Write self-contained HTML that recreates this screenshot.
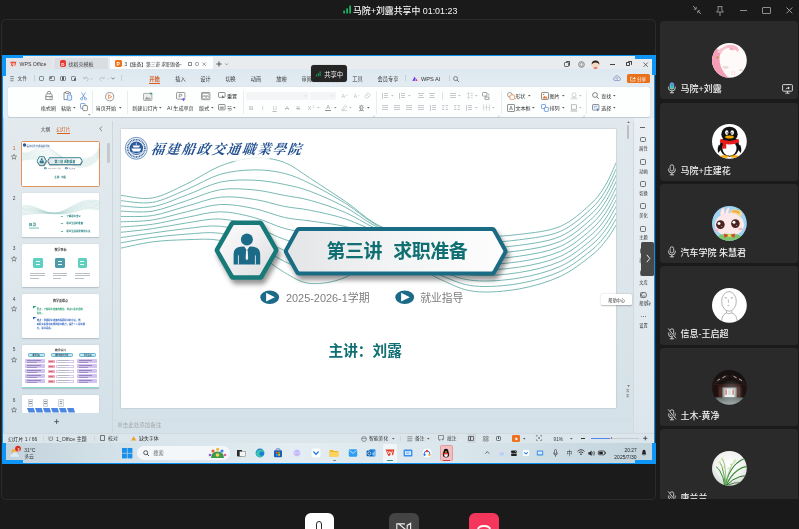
<!DOCTYPE html>
<html lang="zh-CN"><head><meta charset="utf-8"><title>马院+刘露共享中</title>
<style>
html,body{margin:0;padding:0;}
body{width:799px;height:529px;overflow:hidden;background:#1a1a1a;position:relative;font-family:"Liberation Sans","Noto Sans CJK SC",sans-serif;}
div,span.t,svg{position:absolute;box-sizing:border-box;}
span.t{white-space:nowrap;}
svg{overflow:visible;}
#wrap{left:0;top:0;width:799px;height:529px;will-change:transform;}
</style></head><body><div id="wrap">

<svg style="left:342.5px;top:4.5px;" width="9" height="9" viewBox="0 0 9 9"><rect x="0.3" y="5.6" width="1.6" height="2.9" rx=".5" fill="#1fc46a"/><rect x="3.3" y="3.2" width="1.6" height="5.3" rx=".5" fill="#1fc46a"/><rect x="6.3" y="0.5" width="1.6" height="8" rx=".5" fill="#1fc46a"/></svg>
<span class="t" style="top:5px;font-size:8.9px;line-height:12.46px;color:#f4f4f4;font-weight:500;left:353px;">马院+刘露共享中 01:01:23</span>
<svg style="left:692.4px;top:5.4px;" width="10" height="10" viewBox="0 0 10 10"><path d="M1 1 L4 4 M4.2 1.8 V4.2 H1.8 M9 9 L6 6 M5.8 8.2 V5.8 H8.2" stroke="#8e8e8e" stroke-width="1" fill="none"/></svg>
<svg style="left:714.4px;top:4.6px;" width="12" height="12" viewBox="0 0 12 12"><path d="M3.6 1.6 H8.4 M4.2 1.6 V5 L2.6 7 H9.4 L7.8 5 V1.6 M6 7 V11" stroke="#8e8e8e" stroke-width="1" fill="none"/></svg>
<div style="left:739.6px;top:10.2px;width:7.4px;height:1.1px;background:#8e8e8e;"></div>
<div style="left:762.2px;top:6.6px;width:8.4px;height:7.8px;border:1.1px solid #8e8e8e;border-radius:1px;"></div>
<svg style="left:785.6px;top:7.4px;" width="6.8" height="6.8" viewBox="0 0 6.8 6.8"><path d="M0.5 0.5 L6.3 6.3 M6.3 0.5 L0.5 6.3" stroke="#9c9c9c" stroke-width="1" fill="none"/></svg>
<div style="left:0.8px;top:18.9px;width:655px;height:481.4px;background:#1b1b1b;border:1px solid #2b2b2b;border-radius:4.5px;"></div>
<div style="left:2.1px;top:55.2px;width:653.1px;height:408.5px;background:#0b8fee;"></div>
<div style="left:3.3px;top:56.3px;width:651px;height:406.4px;background:#e3ecf2;"></div>
<div style="left:3.3px;top:56.3px;width:651px;height:14.2px;background:#e8ecef;"></div>
<div style="left:6px;top:58.2px;width:47px;height:11.4px;background:#e1e5e9;border-radius:2px 2px 0 0;"></div>
<div style="left:54.4px;top:58.2px;width:54px;height:11.4px;background:#d9dee3;border-radius:2px 2px 0 0;"></div>
<div style="left:110px;top:56.5px;width:102.6px;height:13px;background:#fcfdfe;border-radius:0 0 2.5px 2.5px;"></div>
<svg style="left:10px;top:60.6px;" width="6.6" height="5.8" viewBox="0 0 7 6"><path d="M0.3 0.6 H6.7 L5.4 5.4 L3.9 3.2 L3.1 5.4 L1.7 5.4 Z" fill="#e8402a"/><path d="M1.8 1.6 L2.6 4 L3.5 2 L4.4 4 L5.2 1.6" stroke="#fff" stroke-width=".55" fill="none"/></svg>
<span class="t" style="top:61px;font-size:5.2px;line-height:7.28px;color:#3a3a3a;left:19.6px;">WPS Office</span>
<div style="left:59.8px;top:60.2px;width:6.2px;height:7px;background:#e43b32;border-radius:1.8px;"></div>
<span class="t" style="top:62px;font-size:4.4px;line-height:6.16px;color:#fff;font-weight:700;left:62.9px;transform:translateX(-50%);">D</span>
<span class="t" style="top:61px;font-size:5.1px;line-height:7.14px;color:#444;left:68.2px;">找稻壳模板</span>
<div style="left:114.8px;top:60.2px;width:6.9px;height:6.9px;background:#f0731c;border-radius:1.4px;"></div>
<span class="t" style="top:62px;font-size:4.8px;line-height:6.72px;color:#fff;font-weight:700;left:118.2px;transform:translateX(-50%);">P</span>
<span class="t" style="top:62px;font-size:4.8px;line-height:6.72px;color:#3a3a3a;left:124.6px;letter-spacing:-.1px;">3【集备】第三讲 求职准备-</span>
<div style="left:187.6px;top:62.2px;width:4px;height:3.4px;border:.6px solid #8a8f94;border-radius:.6px;"></div>
<div style="left:194.6px;top:62px;width:4.6px;height:3.6px;border:.6px solid #8a8f94;border-radius:1.6px;"></div>
<svg style="left:202.2px;top:62px;" width="4.4" height="4.4" viewBox="0 0 4.4 4.4"><path d="M.5 .5 L3.9 3.9 M3.9 .5 L.5 3.9" stroke="#666" stroke-width=".6"/></svg>
<svg style="left:215.6px;top:61.4px;" width="6" height="6" viewBox="0 0 6 6"><path d="M3 .4 V5.6 M.4 3 H5.6" stroke="#333" stroke-width=".8"/></svg>
<svg style="left:224.6px;top:63px;" width="3.4" height="2.4" viewBox="0 0 3.4 2.4"><path d="M.4 .5 L1.7 1.8 L3 .5" stroke="#555" stroke-width=".55" fill="none"/></svg>
<div style="left:564.4px;top:61.6px;width:4.6px;height:5px;border:.6px solid #6a7075;border-radius:1px;"></div>
<div style="left:565.6px;top:60.6px;width:4.6px;height:5px;border-top:.7px solid #555;border-right:.7px solid #555;border-radius:1px;"></div>
<svg style="left:578px;top:61px;" width="7" height="7" viewBox="0 0 7 7"><circle cx="3.5" cy="3.5" r="2.9" fill="none" stroke="#555" stroke-width=".6"/><path d="M3.5 1.6 L5 2.6 V4.4 L3.5 5.4 L2 4.4 V2.6Z" fill="none" stroke="#555" stroke-width=".5"/></svg>
<svg style="left:591px;top:59.9px;" width="9" height="9" viewBox="0 0 9 9"><circle cx="4.5" cy="4.5" r="4.2" fill="#f3d9c2"/><path d="M.6 4.4 Q.8 .4 4.5 .4 Q8.2 .4 8.4 4.6 Q6.8 2.4 4.5 2.6 Q2 2.6 .6 4.4Z" fill="#2a211d"/><path d="M2.2 8 Q4.5 6.4 6.8 8 Q4.5 9.4 2.2 8Z" fill="#d44"/></svg>
<div style="left:609.6px;top:64px;width:5px;height:0.8px;background:#444;"></div>
<div style="left:626.2px;top:62.2px;width:4.2px;height:4.2px;border:.7px solid #444;border-radius:.8px;"></div>
<div style="left:627.6px;top:60.9px;width:4.2px;height:4.2px;border-top:.7px solid #444;border-right:.7px solid #444;border-radius:.8px;"></div>
<svg style="left:643.4px;top:61.6px;" width="5.4" height="5.4" viewBox="0 0 5.4 5.4"><path d="M.5 .5 L4.9 4.9 M4.9 .5 L.5 4.9" stroke="#444" stroke-width=".75"/></svg>
<div style="left:3.3px;top:69.4px;width:651px;height:17.4px;background:linear-gradient(180deg,#dde8f0,#e3ecf2);"></div>
<svg style="left:10.2px;top:75.6px;" width="4" height="5.4" viewBox="0 0 4 5.4"><path d="M.3 .6 H3.7 M.3 2.7 H3.7 M.3 4.8 H3.7" stroke="#444" stroke-width=".6"/></svg>
<span class="t" style="top:76px;font-size:4.7px;line-height:6.58px;color:#333;left:17.6px;">文件</span>
<div style="left:34.2px;top:75.4px;width:0.5px;height:6px;background:#c5d0d8;"></div>
<div style="left:38.6px;top:75.6px;width:5.4px;height:5.6px;border:.6px solid #7d8489;border-radius:1.2px;"></div>
<div style="left:49.4px;top:75.6px;width:5.4px;height:5.6px;border:.6px solid #7d8489;border-radius:1.2px;"></div>
<div style="left:60.199999999999996px;top:75.6px;width:5.4px;height:5.6px;border:.6px solid #7d8489;border-radius:1.2px;"></div>
<div style="left:70.60000000000001px;top:75.6px;width:5.4px;height:5.6px;border:.6px solid #7d8489;border-radius:1.2px;"></div>
<div style="left:50.4px;top:76.8px;width:2px;height:2px;background:#5a5f63;border-radius:1px;"></div>
<div style="left:61.6px;top:77.4px;width:2.4px;height:2.6px;background:#5a5f63;"></div>
<div style="left:73.6px;top:78.4px;width:2.6px;height:2.6px;background:#5a5f63;border-radius:1.3px;"></div>
<svg style="left:82.6px;top:75.6px;" width="6" height="5.6" viewBox="0 0 6 5.6"><path d="M1 2.4 Q3.4 .2 5 2.2 Q5.8 4 3.6 5.2" stroke="#a8adb2" stroke-width=".7" fill="none"/><path d="M.6 .8 L.9 2.8 L2.8 2.4" stroke="#a8adb2" stroke-width=".6" fill="none"/></svg>
<svg style="left:90.4px;top:77.6px;" width="3" height="2" viewBox="0 0 3 2"><path d="M.3 .3 L1.5 1.5 L2.7 .3" stroke="#a8adb2" stroke-width=".5" fill="none"/></svg>
<svg style="left:99px;top:75.6px;" width="6" height="5.6" viewBox="0 0 6 5.6"><path d="M5 2.4 Q2.6 .2 1 2.2 Q.2 4 2.4 5.2" stroke="#b4b9bd" stroke-width=".7" fill="none"/><path d="M5.4 .8 L5.1 2.8 L3.2 2.4" stroke="#b4b9bd" stroke-width=".6" fill="none"/></svg>
<svg style="left:107px;top:77.6px;" width="3" height="2" viewBox="0 0 3 2"><path d="M.3 .3 L1.5 1.5 L2.7 .3" stroke="#b4b9bd" stroke-width=".5" fill="none"/></svg>
<svg style="left:110.8px;top:77.2px;" width="4" height="3" viewBox="0 0 4 3"><path d="M.4 .5 L2 2.2 L3.6 .5" stroke="#555" stroke-width=".65" fill="none"/></svg>
<div style="left:121.2px;top:75.4px;width:0.5px;height:6px;background:#c5d0d8;"></div>
<span class="t" style="top:76px;font-size:5.3px;line-height:7.42px;color:#cf5418;font-weight:700;left:154.6px;transform:translateX(-50%);">开始</span>
<div style="left:149.2px;top:83.3px;width:10.8px;height:0.9px;background:#d9601f;"></div>
<span class="t" style="top:76px;font-size:5.2px;line-height:7.28px;color:#333;left:180.4px;transform:translateX(-50%);">插入</span>
<span class="t" style="top:76px;font-size:5.2px;line-height:7.28px;color:#333;left:205.4px;transform:translateX(-50%);">设计</span>
<span class="t" style="top:76px;font-size:5.2px;line-height:7.28px;color:#333;left:230.6px;transform:translateX(-50%);">切换</span>
<span class="t" style="top:76px;font-size:5.2px;line-height:7.28px;color:#333;left:256px;transform:translateX(-50%);">动画</span>
<span class="t" style="top:76px;font-size:5.2px;line-height:7.28px;color:#333;left:281.4px;transform:translateX(-50%);">放映</span>
<span class="t" style="top:76px;font-size:5.2px;line-height:7.28px;color:#333;left:306.6px;transform:translateX(-50%);">审阅</span>
<span class="t" style="top:76px;font-size:5.2px;line-height:7.28px;color:#333;left:332px;transform:translateX(-50%);">视图</span>
<span class="t" style="top:76px;font-size:5.2px;line-height:7.28px;color:#333;left:357.4px;transform:translateX(-50%);">工具</span>
<span class="t" style="top:76px;font-size:5.2px;line-height:7.28px;color:#333;left:388px;transform:translateX(-50%);">会员专享</span>
<div style="left:405.4px;top:75.4px;width:0.5px;height:6px;background:#c5d0d8;"></div>
<svg style="left:411.6px;top:75.8px;" width="6" height="5.4" viewBox="0 0 6 5.4"><path d="M.4 5 L2.6 .4 L3.8 2.8 L2.4 5Z" fill="#6a3df0"/><path d="M3.2 5 L4.4 2.4 L5.7 5Z" fill="#e8407a"/></svg>
<span class="t" style="top:76px;font-size:5.6px;line-height:7.84px;color:#333;left:421px;">WPS AI</span>
<div style="left:449.2px;top:75.4px;width:0.5px;height:6px;background:#c5d0d8;"></div>
<svg style="left:453.4px;top:75.6px;" width="6.4" height="6.4" viewBox="0 0 6.4 6.4"><circle cx="2.6" cy="2.6" r="2" fill="none" stroke="#555" stroke-width=".7"/><path d="M4.1 4.1 L5.9 5.9" stroke="#555" stroke-width=".8"/></svg>
<svg style="left:613.4px;top:75.4px;" width="8" height="6.4" viewBox="0 0 8 6.4"><path d="M2 5.6 Q.4 5.4 .5 3.8 Q.7 2.6 2 2.6 Q2.4 .6 4.2 .6 Q5.8 .7 6.1 2.4 Q7.6 2.6 7.5 4.2 Q7.4 5.6 6 5.6Z" fill="none" stroke="#6f7fb0" stroke-width=".65"/><path d="M4 4.8 V2.6 M3 3.5 L4 2.5 L5 3.5" stroke="#6f7fb0" stroke-width=".55" fill="none"/></svg>
<div style="left:626.6px;top:73.6px;width:23.6px;height:9.6px;background:#ea711c;border-radius:1.6px;"></div>
<svg style="left:629.8px;top:75.6px;" width="6" height="5.6" viewBox="0 0 6 5.6"><path d="M2.4 1.2 H1 Q.5 1.2 .5 1.8 V4.6 Q.5 5.1 1 5.1 H4.6 Q5.1 5.1 5.1 4.6 V3.8" stroke="#fff" stroke-width=".6" fill="none"/><path d="M2.2 3.6 Q2.6 1.8 4.2 1.8 V.8 L5.8 2.2 L4.2 3.5 V2.7 Q3 2.7 2.2 3.6Z" fill="#fff"/></svg>
<span class="t" style="top:77px;font-size:4.6px;line-height:6.44px;color:#fff;left:637px;">分享</span>
<div style="left:3.3px;top:86.6px;width:651px;height:31.6px;background:#e3ecf2;"></div>
<div style="left:7.6px;top:87px;width:642.6px;height:30.4px;background:#fdfefe;border-radius:2.6px;box-shadow:0 .5px 1px rgba(120,135,150,.35);"></div>
<svg style="left:44.6px;top:91.4px;" width="8" height="9.4" viewBox="0 0 8 9.4"><path d="M2.6 2.6 V1.2 Q2.6 .5 3.4 .5 H4.6 Q5.4 .5 5.4 1.2 V2.6 M.8 4.6 Q.8 2.8 2.4 2.8 H5.6 Q7.2 2.8 7.2 4.6 V8.6 H.8Z M.8 5.6 H7.2" fill="none" stroke="#555" stroke-width=".65"/><path d="M5 5.6 V7.6" stroke="#555" stroke-width=".5"/></svg>
<span class="t" style="top:105px;font-size:5.1px;line-height:7.14px;color:#3a3a3a;left:48.4px;transform:translateX(-50%);">格式刷</span>
<svg style="left:63.4px;top:91.4px;" width="9" height="9.6" viewBox="0 0 9 9.6"><path d="M2.6 1.6 H1 V8.6 H4" fill="none" stroke="#555" stroke-width=".65"/><path d="M6 1.6 H7.4 V3.6" fill="none" stroke="#555" stroke-width=".65"/><rect x="2.6" y=".6" width="3.4" height="1.9" rx=".5" fill="none" stroke="#555" stroke-width=".6"/><rect x="4.4" y="4" width="4.2" height="5.2" rx=".6" fill="#e8f0ff" stroke="#3f78d8" stroke-width=".65"/></svg>
<span class="t" style="top:105px;font-size:5.1px;line-height:7.14px;color:#3a3a3a;left:66.2px;transform:translateX(-50%);">粘贴</span>
<svg style="left:72.8px;top:107.0px;" width="2.6" height="1.8" viewBox="0 0 2.6 1.8"><path d="M0 0 H2.6 L1.3 1.6Z" fill="#555"/></svg>
<svg style="left:80.4px;top:91.8px;" width="7" height="8.4" viewBox="0 0 7 8.4"><path d="M1.6 .5 L4.8 6 M5.4 .5 L2.2 6" stroke="#3f78d8" stroke-width=".65" fill="none"/><circle cx="1.6" cy="6.8" r="1.1" fill="none" stroke="#3f78d8" stroke-width=".6"/><circle cx="5.4" cy="6.8" r="1.1" fill="none" stroke="#3f78d8" stroke-width=".6"/></svg>
<svg style="left:80px;top:103.2px;" width="8" height="8" viewBox="0 0 8 8"><rect x=".5" y=".5" width="4.6" height="5" rx=".7" fill="none" stroke="#3f78d8" stroke-width=".65"/><rect x="2.8" y="2.6" width="4.6" height="5" rx=".7" fill="#fff" stroke="#555" stroke-width=".65"/></svg>
<svg style="left:88px;top:114.2px;" width="2.6" height="1.8" viewBox="0 0 2.6 1.8"><path d="M0 0 H2.6 L1.3 1.6Z" fill="#888"/></svg>
<div style="left:92.4px;top:91px;width:0.5px;height:23px;background:#e9edf0;"></div>
<svg style="left:104.6px;top:91.6px;" width="9.6" height="9.6" viewBox="0 0 9.6 9.6"><circle cx="4.7" cy="4.7" r="4.1" fill="none" stroke="#666" stroke-width=".65"/><path d="M3.5 2.7 L6.7 4.7 L3.5 6.7Z" fill="none" stroke="#e8702a" stroke-width=".7" stroke-linejoin="round"/></svg>
<span class="t" style="top:105px;font-size:5.1px;line-height:7.14px;color:#3a3a3a;left:105.8px;transform:translateX(-50%);">当页开始</span>
<svg style="left:119.4px;top:107.0px;" width="2.6" height="1.8" viewBox="0 0 2.6 1.8"><path d="M0 0 H2.6 L1.3 1.6Z" fill="#555"/></svg>
<div style="left:127.4px;top:91px;width:0.5px;height:23px;background:#e9edf0;"></div>
<svg style="left:142.6px;top:91.6px;" width="10" height="9" viewBox="0 0 10 9"><rect x=".5" y="1.4" width="8.4" height="7" rx=".8" fill="#eceeef" stroke="#777" stroke-width=".6"/><path d="M1.6 7.4 L3.8 4.6 L5.4 6.2 L6.4 5.2 L8 7.4Z" fill="#9aa0a5"/><path d="M8 .2 V3 M6.6 1.6 H9.4" stroke="#2da05a" stroke-width=".7"/></svg>
<span class="t" style="top:105px;font-size:5.1px;line-height:7.14px;color:#3a3a3a;left:145px;transform:translateX(-50%);">新建幻灯片</span>
<svg style="left:158.8px;top:107.0px;" width="2.6" height="1.8" viewBox="0 0 2.6 1.8"><path d="M0 0 H2.6 L1.3 1.6Z" fill="#555"/></svg>
<svg style="left:176px;top:91.6px;" width="10" height="9.4" viewBox="0 0 10 9.4"><rect x=".5" y=".5" width="8.4" height="6.6" rx=".8" fill="none" stroke="#666" stroke-width=".65"/><path d="M3.2 5.6 V2.2 H4.8 Q6 2.2 6 3.2 Q6 4.2 4.8 4.2 H3.2" fill="none" stroke="#666" stroke-width=".6"/><path d="M7.4 5.4 L8 7 L9.6 7.6 L8 8.2 L7.4 9.4 L6.8 8.2 L5.2 7.6 L6.8 7Z" fill="#7a4df0"/></svg>
<span class="t" style="top:105px;font-size:5.1px;line-height:7.14px;color:#3a3a3a;left:180.4px;transform:translateX(-50%);">AI 生成单页</span>
<svg style="left:201px;top:92px;" width="9.4" height="8.4" viewBox="0 0 9.4 8.4"><rect x=".5" y=".5" width="8.4" height="7.2" rx=".8" fill="#eceeef" stroke="#666" stroke-width=".65"/><rect x="1.8" y="1.8" width="5.8" height="1.8" fill="#fff" stroke="#777" stroke-width=".4"/><rect x="1.8" y="4.6" width="2.4" height="2" fill="#fff" stroke="#777" stroke-width=".4"/><rect x="5.2" y="4.6" width="2.4" height="2" fill="#fff" stroke="#777" stroke-width=".4"/></svg>
<span class="t" style="top:105px;font-size:5.1px;line-height:7.14px;color:#3a3a3a;left:204.2px;transform:translateX(-50%);">版式</span>
<svg style="left:210.6px;top:107.0px;" width="2.6" height="1.8" viewBox="0 0 2.6 1.8"><path d="M0 0 H2.6 L1.3 1.6Z" fill="#555"/></svg>
<svg style="left:218.4px;top:92px;" width="8" height="7" viewBox="0 0 8 7"><rect x=".5" y=".5" width="6.6" height="4.8" rx=".7" fill="none" stroke="#555" stroke-width=".65"/><path d="M4 3 L6.4 5.6 L5.2 5.6 L4.6 6.8Z" fill="#555"/></svg>
<span class="t" style="top:93px;font-size:5.1px;line-height:7.14px;color:#333;left:227px;">重置</span>
<svg style="left:218.4px;top:103.8px;" width="8" height="7" viewBox="0 0 8 7"><rect x=".5" y=".5" width="6.6" height="5.4" rx=".7" fill="none" stroke="#555" stroke-width=".65"/><rect x="1.8" y="2.6" width="4" height="2.2" fill="#9aa0a5"/></svg>
<span class="t" style="top:105px;font-size:5.1px;line-height:7.14px;color:#333;left:227px;">节</span>
<svg style="left:233.4px;top:107.0px;" width="2.6" height="1.8" viewBox="0 0 2.6 1.8"><path d="M0 0 H2.6 L1.3 1.6Z" fill="#555"/></svg>
<div style="left:243.2px;top:91px;width:0.5px;height:23px;background:#e9edf0;"></div>
<div style="left:246px;top:91.6px;width:62.6px;height:8.8px;background:#f3f5f6;border-radius:1.4px;"></div>
<div style="left:310.4px;top:91.6px;width:25.4px;height:8.8px;background:#f3f5f6;border-radius:1.4px;"></div>
<svg style="left:304px;top:95.2px;" width="3" height="2" viewBox="0 0 3 2"><path d="M.3 .3 L1.5 1.5 L2.7 .3" stroke="#c4c8cc" stroke-width=".5" fill="none"/></svg>
<svg style="left:331px;top:95.2px;" width="3" height="2" viewBox="0 0 3 2"><path d="M.3 .3 L1.5 1.5 L2.7 .3" stroke="#c4c8cc" stroke-width=".5" fill="none"/></svg>
<span class="t" style="top:93px;font-size:5.6px;line-height:7.84px;color:#b9bdc1;left:343.4px;transform:translateX(-50%);">A</span>
<span class="t" style="top:93px;font-size:3.4px;line-height:4.76px;color:#b9bdc1;left:347px;transform:translateX(-50%);">+</span>
<span class="t" style="top:93px;font-size:5px;line-height:7.0px;color:#b9bdc1;left:355.4px;transform:translateX(-50%);">A</span>
<span class="t" style="top:93px;font-size:3.6px;line-height:5.04px;color:#b9bdc1;left:358.8px;transform:translateX(-50%);">-</span>
<svg style="left:364.4px;top:92.4px;" width="7" height="6.6" viewBox="0 0 7 6.6"><path d="M3.8 .6 L6.4 3.2 L3.4 6 H1.8 L.6 4.6Z M2.2 2.2 L4.8 4.8" fill="none" stroke="#b9bdc1" stroke-width=".6"/></svg>
<span class="t" style="top:104px;font-size:6px;line-height:8.4px;color:#b9bdc1;font-weight:700;left:251.2px;transform:translateX(-50%);">B</span>
<span class="t" style="top:104px;font-size:6px;line-height:8.4px;color:#b9bdc1;left:262.6px;transform:translateX(-50%);font-style:italic;">I</span>
<span class="t" style="top:104px;font-size:6px;line-height:8.4px;color:#b9bdc1;left:274.6px;transform:translateX(-50%);text-decoration:underline;">U</span>
<span class="t" style="top:104px;font-size:6px;line-height:8.4px;color:#b9bdc1;left:287px;transform:translateX(-50%);text-decoration:line-through;">A</span>
<span class="t" style="top:104px;font-size:6px;line-height:8.4px;color:#b9bdc1;left:298.2px;transform:translateX(-50%);text-decoration:line-through;">S</span>
<span class="t" style="top:104px;font-size:6px;line-height:8.4px;color:#b9bdc1;left:309.6px;transform:translateX(-50%);">X</span>
<span class="t" style="top:105px;font-size:3.2px;line-height:4.48px;color:#b9bdc1;left:313.4px;transform:translateX(-50%);">2</span>
<svg style="left:317px;top:107.0px;" width="2.6" height="1.8" viewBox="0 0 2.6 1.8"><path d="M0 0 H2.6 L1.3 1.6Z" fill="#b9bdc1"/></svg>
<span class="t" style="top:104px;font-size:5.6px;line-height:7.84px;color:#9aa0a5;left:328px;transform:translateX(-50%);">A</span>
<div style="left:325.4px;top:110.4px;width:5.2px;height:1px;background:#8c9196;"></div>
<svg style="left:333.6px;top:107.0px;" width="2.6" height="1.8" viewBox="0 0 2.6 1.8"><path d="M0 0 H2.6 L1.3 1.6Z" fill="#8c9196"/></svg>
<svg style="left:340.6px;top:104.2px;" width="7" height="7" viewBox="0 0 7 7"><path d="M1 5.6 L4.4 1 L5.8 2.2 L2.6 6 H1Z" fill="none" stroke="#b9bdc1" stroke-width=".6"/><path d="M.4 6.6 H6.4" stroke="#b9bdc1" stroke-width=".6"/></svg>
<svg style="left:348.6px;top:107.0px;" width="2.6" height="1.8" viewBox="0 0 2.6 1.8"><path d="M0 0 H2.6 L1.3 1.6Z" fill="#b9bdc1"/></svg>
<span class="t" style="top:105px;font-size:5.4px;line-height:7.56px;color:#555;left:361.4px;transform:translateX(-50%);">变</span>
<svg style="left:366.8px;top:107.0px;" width="2.6" height="1.8" viewBox="0 0 2.6 1.8"><path d="M0 0 H2.6 L1.3 1.6Z" fill="#555"/></svg>
<div style="left:376.2px;top:91px;width:0.5px;height:23px;background:#e9edf0;"></div>
<svg style="left:382px;top:93px;" width="6" height="6" viewBox="0 0 6 6"><path d="M.5 0 V6 M2 .5 H6 M2 2.5 H6 M2 4.5 H6" stroke="#c6cacf" stroke-width="1" fill="none"/></svg>
<svg style="left:391.4px;top:95.0px;" width="2.6" height="1.8" viewBox="0 0 2.6 1.8"><path d="M0 0 H2.6 L1.3 1.6Z" fill="#b9bdc1"/></svg>
<svg style="left:399px;top:93px;" width="6" height="6" viewBox="0 0 6 6"><path d="M.5 0 V6 M2 .5 H6 M2 2.5 H6 M2 4.5 H6" stroke="#c6cacf" stroke-width="1" fill="none"/></svg>
<svg style="left:408.4px;top:95.0px;" width="2.6" height="1.8" viewBox="0 0 2.6 1.8"><path d="M0 0 H2.6 L1.3 1.6Z" fill="#b9bdc1"/></svg>
<svg style="left:418px;top:93px;" width="6" height="6" viewBox="0 0 6 6"><path d="M0 .5 H6 M1 2.5 H5 M0 4.5 H6" stroke="#c6cacf" stroke-width="1" fill="none"/></svg>
<svg style="left:429px;top:93px;" width="6" height="6" viewBox="0 0 6 6"><path d="M0 .5 H6 M1 2.5 H5 M0 4.5 H6" stroke="#c6cacf" stroke-width="1" fill="none"/></svg>
<div style="left:441.8px;top:92px;width:0.5px;height:8px;background:#e1e5e8;"></div>
<svg style="left:450px;top:93px;" width="6" height="6" viewBox="0 0 6 6"><path d="M0 .5 H6 M0 2.5 H6 M0 4.5 H6" stroke="#c6cacf" stroke-width="1" fill="none"/></svg>
<svg style="left:458.2px;top:95.0px;" width="2.6" height="1.8" viewBox="0 0 2.6 1.8"><path d="M0 0 H2.6 L1.3 1.6Z" fill="#b9bdc1"/></svg>
<svg style="left:466.6px;top:92.2px;" width="6" height="7" viewBox="0 0 6 7"><path d="M1.4 .6 V6.4 M.2 1.8 L1.4 .6 L2.6 1.8 M.2 5.2 L1.4 6.4 L2.6 5.2 M3.6 1.4 H5.8 M3.6 3.5 H5.8 M3.6 5.6 H5.8" stroke="#b9bdc1" stroke-width=".6" fill="none"/></svg>
<svg style="left:474.6px;top:95.0px;" width="2.6" height="1.8" viewBox="0 0 2.6 1.8"><path d="M0 0 H2.6 L1.3 1.6Z" fill="#b9bdc1"/></svg>
<svg style="left:481.8px;top:91.8px;" width="8" height="8" viewBox="0 0 8 8"><rect x=".5" y=".5" width="4.4" height="3.6" rx=".6" fill="none" stroke="#666" stroke-width=".6"/><path d="M3 5 L7 5 L7 7.4 L3 7.4Z" fill="#fff" stroke="#666" stroke-width=".6"/><path d="M5.6 1.6 Q7 1.8 7 3.6" stroke="#666" stroke-width=".55" fill="none"/></svg>
<svg style="left:382px;top:105px;" width="6" height="6" viewBox="0 0 6 6"><path d="M0 .5 H6 M0 2.5 H6 M0 4.5 H6" stroke="#c6cacf" stroke-width="1" fill="none"/></svg>
<svg style="left:394px;top:105px;" width="6" height="6" viewBox="0 0 6 6"><path d="M0 .5 H6 M0 2.5 H6 M0 4.5 H6" stroke="#c6cacf" stroke-width="1" fill="none"/></svg>
<svg style="left:406px;top:105px;" width="6" height="6" viewBox="0 0 6 6"><path d="M0 .5 H6 M0 2.5 H6 M0 4.5 H6" stroke="#c6cacf" stroke-width="1" fill="none"/></svg>
<svg style="left:418px;top:105px;" width="6" height="6" viewBox="0 0 6 6"><path d="M0 .5 H6 M0 2.5 H6 M0 4.5 H6" stroke="#c6cacf" stroke-width="1" fill="none"/></svg>
<svg style="left:430px;top:105px;" width="6" height="6" viewBox="0 0 6 6"><path d="M.5 0 V6 M2 .5 H6 M2 2.5 H6 M2 4.5 H6" stroke="#c6cacf" stroke-width="1" fill="none"/></svg>
<svg style="left:442px;top:105px;" width="6" height="6" viewBox="0 0 6 6"><path d="M0 .5 H2.4 M3.6 .5 H6 M0 4.5 H2.4 M3.6 4.5 H6 M1.2 1.6 V3.4 M4.8 1.6 V3.4" stroke="#c6cacf" stroke-width="1" fill="none"/></svg>
<svg style="left:454px;top:105px;" width="6" height="6" viewBox="0 0 6 6"><path d="M0 .5 H2.4 M3.6 .5 H6 M0 4.5 H2.4 M3.6 4.5 H6 M1.2 1.6 V3.4 M4.8 1.6 V3.4" stroke="#c6cacf" stroke-width="1" fill="none"/></svg>
<svg style="left:466px;top:105px;" width="6" height="6" viewBox="0 0 6 6"><path d="M.5 0 V6 M2 .5 H6 M2 2.5 H6 M2 4.5 H6" stroke="#c6cacf" stroke-width="1" fill="none"/></svg>
<svg style="left:474.6px;top:107.0px;" width="2.6" height="1.8" viewBox="0 0 2.6 1.8"><path d="M0 0 H2.6 L1.3 1.6Z" fill="#b9bdc1"/></svg>
<svg style="left:483px;top:104.4px;" width="7" height="7" viewBox="0 0 7 7"><path d="M.6 .4 V6.6 M3.5 .4 V6.6 M6.4 .4 V6.6 M1.4 3.5 H2.7 M4.3 3.5 H5.6" stroke="#b9bdc1" stroke-width=".6"/></svg>
<svg style="left:491.6px;top:107.0px;" width="2.6" height="1.8" viewBox="0 0 2.6 1.8"><path d="M0 0 H2.6 L1.3 1.6Z" fill="#b9bdc1"/></svg>
<svg style="left:497px;top:114.6px;" width="2.4" height="2.4" viewBox="0 0 2.4 2.4"><path d="M.2 2.2 H2.2 V.2" stroke="#b0b5b9" stroke-width=".5" fill="none"/></svg>
<svg style="left:372px;top:114.6px;" width="2.4" height="2.4" viewBox="0 0 2.4 2.4"><path d="M.2 2.2 H2.2 V.2" stroke="#b0b5b9" stroke-width=".5" fill="none"/></svg>
<div style="left:501.4px;top:91px;width:0.5px;height:23px;background:#e9edf0;"></div>
<svg style="left:506.6px;top:91.8px;" width="8" height="8" viewBox="0 0 8 8"><circle cx="2.8" cy="2.8" r="2.3" fill="none" stroke="#666" stroke-width=".6"/><rect x="3" y="3" width="4.4" height="4.4" rx=".6" fill="#fff" stroke="#e8702a" stroke-width=".65"/></svg>
<span class="t" style="top:93px;font-size:5.1px;line-height:7.14px;color:#333;left:515.2px;">形状</span>
<svg style="left:527.8px;top:95.0px;" width="2.6" height="1.8" viewBox="0 0 2.6 1.8"><path d="M0 0 H2.6 L1.3 1.6Z" fill="#555"/></svg>
<svg style="left:540.6px;top:91.8px;" width="8" height="8" viewBox="0 0 8 8"><rect x=".5" y=".5" width="7" height="7" rx=".8" fill="none" stroke="#555" stroke-width=".65"/><path d="M1.4 6.4 L3.4 3.8 L4.8 5.2 L5.6 4.4 L6.8 6.4Z" fill="#e8702a"/><circle cx="2.6" cy="2.4" r=".7" fill="#e8702a"/></svg>
<span class="t" style="top:93px;font-size:5.1px;line-height:7.14px;color:#333;left:549.4px;">图片</span>
<svg style="left:561.6px;top:95.0px;" width="2.6" height="1.8" viewBox="0 0 2.6 1.8"><path d="M0 0 H2.6 L1.3 1.6Z" fill="#555"/></svg>
<svg style="left:570px;top:91.8px;" width="8" height="8" viewBox="0 0 8 8"><circle cx="4" cy="2.8" r="2" fill="none" stroke="#b9bdc1" stroke-width=".6"/><path d="M.6 6.8 H7.4 M1.6 5.4 H6.4" stroke="#b9bdc1" stroke-width=".6"/></svg>
<svg style="left:579.4px;top:95.0px;" width="2.6" height="1.8" viewBox="0 0 2.6 1.8"><path d="M0 0 H2.6 L1.3 1.6Z" fill="#b9bdc1"/></svg>
<svg style="left:506.6px;top:104px;" width="8" height="8" viewBox="0 0 8 8"><rect x=".5" y=".5" width="7" height="7" rx=".6" fill="none" stroke="#555" stroke-width=".65"/><path d="M2.4 6 L4 2 L5.6 6 M3 4.8 H5" stroke="#555" stroke-width=".55" fill="none"/></svg>
<span class="t" style="top:105px;font-size:5.1px;line-height:7.14px;color:#333;left:515.4px;">文本框</span>
<svg style="left:532.4px;top:107.0px;" width="2.6" height="1.8" viewBox="0 0 2.6 1.8"><path d="M0 0 H2.6 L1.3 1.6Z" fill="#555"/></svg>
<svg style="left:540.6px;top:104px;" width="8" height="8" viewBox="0 0 8 8"><rect x=".5" y=".5" width="4" height="4" rx=".6" fill="none" stroke="#3f78d8" stroke-width=".65"/><rect x="3.4" y="3.4" width="4" height="4" rx=".6" fill="#fff" stroke="#3f78d8" stroke-width=".65"/></svg>
<span class="t" style="top:105px;font-size:5.1px;line-height:7.14px;color:#333;left:549.4px;">排列</span>
<svg style="left:561.6px;top:107.0px;" width="2.6" height="1.8" viewBox="0 0 2.6 1.8"><path d="M0 0 H2.6 L1.3 1.6Z" fill="#555"/></svg>
<svg style="left:570px;top:104px;" width="8" height="8" viewBox="0 0 8 8"><rect x="1.4" y=".8" width="5.2" height="4.4" fill="none" stroke="#8c9196" stroke-width=".6"/><path d="M.6 7 H7.4" stroke="#8c9196" stroke-width=".7"/></svg>
<svg style="left:579.4px;top:107.0px;" width="2.6" height="1.8" viewBox="0 0 2.6 1.8"><path d="M0 0 H2.6 L1.3 1.6Z" fill="#b9bdc1"/></svg>
<svg style="left:582.4px;top:114.6px;" width="2.4" height="2.4" viewBox="0 0 2.4 2.4"><path d="M.2 2.2 H2.2 V.2" stroke="#b0b5b9" stroke-width=".5" fill="none"/></svg>
<div style="left:586.4px;top:91px;width:0.5px;height:23px;background:#e9edf0;"></div>
<svg style="left:592.4px;top:92px;" width="7.4" height="7.4" viewBox="0 0 7.4 7.4"><circle cx="3" cy="3" r="2.4" fill="none" stroke="#555" stroke-width=".7"/><path d="M4.8 4.8 L6.8 6.8" stroke="#555" stroke-width=".8"/></svg>
<span class="t" style="top:93px;font-size:5.1px;line-height:7.14px;color:#333;left:601.2px;">查找</span>
<svg style="left:613px;top:95.0px;" width="2.6" height="1.8" viewBox="0 0 2.6 1.8"><path d="M0 0 H2.6 L1.3 1.6Z" fill="#555"/></svg>
<svg style="left:592.2px;top:104px;" width="8" height="8" viewBox="0 0 8 8"><rect x=".5" y=".5" width="6.4" height="5.6" rx=".7" fill="none" stroke="#555" stroke-width=".65"/><path d="M1.6 2.2 H5.6 M1.6 3.8 H3.4" stroke="#3f78d8" stroke-width=".6"/><path d="M4.4 3.6 L7.2 6.2 L5.8 6.3 L5.2 7.6Z" fill="#3f78d8"/></svg>
<span class="t" style="top:105px;font-size:5.1px;line-height:7.14px;color:#333;left:601.2px;">选择</span>
<svg style="left:613px;top:107.0px;" width="2.6" height="1.8" viewBox="0 0 2.6 1.8"><path d="M0 0 H2.6 L1.3 1.6Z" fill="#555"/></svg>
<div style="left:3.3px;top:117.6px;width:109.6px;height:316px;background:linear-gradient(180deg,#e3eaee 0%,#dde7ec 50%,#d3e0e8 100%);"></div>
<div style="left:112.9px;top:117.6px;width:520.6px;height:316px;background:linear-gradient(180deg,#e1e9ed 0%,#dce6eb 50%,#d4e1e8 100%);"></div>
<div style="left:112.2px;top:121px;width:0.6px;height:312px;background:#cdd8de;"></div>
<div style="left:633.5px;top:117.6px;width:20.8px;height:316px;background:linear-gradient(180deg,#e9eff2 0%,#e4ecf0 50%,#dbe6ec 100%);"></div>
<div style="left:633.2px;top:121px;width:0.6px;height:312px;background:#d0dae0;"></div>
<div style="left:3.3px;top:117.6px;width:1px;height:316px;background:#c3cfd7;"></div>
<span class="t" style="top:127px;font-size:4.7px;line-height:6.58px;color:#3a3a3a;left:45.4px;transform:translateX(-50%);">大纲</span>
<span class="t" style="top:127px;font-size:4.7px;line-height:6.58px;color:#d2581c;left:63.4px;transform:translateX(-50%);">幻灯片</span>
<div style="left:57px;top:132.6px;width:12.8px;height:0.8px;background:#d9601f;"></div>
<svg style="left:99.4px;top:126px;" width="3.6" height="5.6" viewBox="0 0 3.6 5.6"><path d="M3 .5 L.7 2.8 L3 5.1" stroke="#555" stroke-width=".7" fill="none"/></svg>
<div style="left:107.4px;top:143px;width:2.2px;height:20.4px;background:#c3c9cd;border-radius:1.1px;"></div>
<div style="left:20.6px;top:141.4px;width:79.6px;height:46px;background:#fff;border:1.1px solid #e4935c;border-radius:1.6px;"></div>
<span class="t" style="top:146px;font-size:4.8px;line-height:6.72px;color:#d2581c;left:14.2px;transform:translateX(-50%);">1</span>
<svg style="left:11.2px;top:154.4px;" width="6" height="6" viewBox="0 0 6 6"><polygon points="3.00,0.30 3.73,1.99 5.57,2.17 4.19,3.39 4.59,5.18 3.00,4.25 1.41,5.18 1.81,3.39 0.43,2.17 2.27,1.99" fill="none" stroke="#555" stroke-width=".6" stroke-linejoin="round"/></svg>
<div style="left:21.8px;top:193.2px;width:77.4px;height:43.6px;background:#fff;border-radius:1px;box-shadow:0 .4px 1.2px rgba(100,120,135,.35);"></div>
<span class="t" style="top:196px;font-size:4.8px;line-height:6.72px;color:#444;left:14.2px;transform:translateX(-50%);">2</span>
<div style="left:21.8px;top:243.8px;width:77.4px;height:43.6px;background:#fff;border-radius:1px;box-shadow:0 .4px 1.2px rgba(100,120,135,.35);"></div>
<span class="t" style="top:246px;font-size:4.8px;line-height:6.72px;color:#444;left:14.2px;transform:translateX(-50%);">3</span>
<svg style="left:11.2px;top:255.8px;" width="6" height="6" viewBox="0 0 6 6"><polygon points="3.00,0.30 3.73,1.99 5.57,2.17 4.19,3.39 4.59,5.18 3.00,4.25 1.41,5.18 1.81,3.39 0.43,2.17 2.27,1.99" fill="none" stroke="#555" stroke-width=".6" stroke-linejoin="round"/></svg>
<div style="left:21.8px;top:294.2px;width:77.4px;height:43.6px;background:#fff;border-radius:1px;box-shadow:0 .4px 1.2px rgba(100,120,135,.35);"></div>
<span class="t" style="top:297px;font-size:4.8px;line-height:6.72px;color:#444;left:14.2px;transform:translateX(-50%);">4</span>
<svg style="left:11.2px;top:306.2px;" width="6" height="6" viewBox="0 0 6 6"><polygon points="3.00,0.30 3.73,1.99 5.57,2.17 4.19,3.39 4.59,5.18 3.00,4.25 1.41,5.18 1.81,3.39 0.43,2.17 2.27,1.99" fill="none" stroke="#555" stroke-width=".6" stroke-linejoin="round"/></svg>
<div style="left:21.8px;top:344.6px;width:77.4px;height:43.6px;background:#fff;border-radius:1px;box-shadow:0 .4px 1.2px rgba(100,120,135,.35);"></div>
<span class="t" style="top:347px;font-size:4.8px;line-height:6.72px;color:#444;left:14.2px;transform:translateX(-50%);">5</span>
<svg style="left:11.2px;top:356.6px;" width="6" height="6" viewBox="0 0 6 6"><polygon points="3.00,0.30 3.73,1.99 5.57,2.17 4.19,3.39 4.59,5.18 3.00,4.25 1.41,5.18 1.81,3.39 0.43,2.17 2.27,1.99" fill="none" stroke="#555" stroke-width=".6" stroke-linejoin="round"/></svg>
<div style="left:21.8px;top:395px;width:77.4px;height:18px;background:#fff;border-radius:1px;box-shadow:0 .4px 1.2px rgba(100,120,135,.35);"></div>
<span class="t" style="top:398px;font-size:4.8px;line-height:6.72px;color:#444;left:14.2px;transform:translateX(-50%);">6</span>
<svg style="left:11.2px;top:407px;" width="6" height="6" viewBox="0 0 6 6"><polygon points="3.00,0.30 3.73,1.99 5.57,2.17 4.19,3.39 4.59,5.18 3.00,4.25 1.41,5.18 1.81,3.39 0.43,2.17 2.27,1.99" fill="none" stroke="#555" stroke-width=".6" stroke-linejoin="round"/></svg>
<svg style="left:21.8px;top:142.0px;" width="77.4" height="43.6" viewBox="0 0 495 279"><g fill="none" stroke="#4fa39c" stroke-width="1.4249999999999998" opacity=".55"><path d="M0.0 66.4 C5.2 66.8 20.4 70.9 31.3 69.0 C42.2 67.1 54.0 60.4 65.3 55.1 C76.6 49.8 88.0 41.4 99.3 37.0 C110.6 32.6 122.6 29.6 133.3 29.0 C144.0 28.4 154.0 30.0 163.3 33.4 C172.6 36.8 179.1 42.9 189.3 49.4 C199.5 55.9 211.8 64.1 224.3 72.4 C236.8 80.7 248.5 93.6 264.3 99.4 C280.1 105.2 304.5 105.9 319.3 107.4 C334.1 108.9 340.1 108.7 353.3 108.4 C366.5 108.1 384.0 107.2 398.3 105.4 C412.6 103.6 427.5 102.4 439.3 97.4 C451.1 92.4 461.8 82.2 469.3 75.4 C476.8 68.6 480.0 63.4 484.3 56.4 C488.6 49.4 493.5 37.2 495.3 33.4"/><path d="M0.0 71.7 C5.2 72.0 20.4 75.2 31.3 73.4 C42.2 71.6 54.0 65.3 65.3 60.7 C76.6 56.0 88.0 48.6 99.3 45.3 C110.6 42.1 122.6 41.0 133.3 40.9 C144.0 40.7 154.0 42.1 163.3 44.4 C172.6 46.7 179.1 49.7 189.3 54.7 C199.5 59.6 211.8 66.7 224.3 74.3 C236.8 81.9 248.5 94.1 264.3 100.4 C280.1 106.6 304.5 109.5 319.3 111.7 C334.1 113.9 340.1 113.9 353.3 113.8 C366.5 113.7 384.0 112.8 398.3 110.8 C412.6 108.9 427.5 107.4 439.3 102.4 C451.1 97.4 461.8 87.3 469.3 80.6 C476.8 73.9 480.0 68.8 484.3 62.0 C488.6 55.2 493.5 43.4 495.3 39.7"/><path d="M0.0 76.9 C5.2 77.1 20.4 79.6 31.3 77.8 C42.2 76.0 54.0 70.3 65.3 66.2 C76.6 62.1 88.0 55.6 99.3 53.1 C110.6 50.6 122.6 50.8 133.3 51.2 C144.0 51.6 154.0 53.5 163.3 55.4 C172.6 57.3 179.1 58.6 189.3 62.4 C199.5 66.2 211.8 71.6 224.3 78.2 C236.8 84.8 248.5 95.6 264.3 101.9 C280.1 108.2 304.5 113.1 319.3 116.0 C334.1 118.9 340.1 119.2 353.3 119.2 C366.5 119.3 384.0 118.3 398.3 116.3 C412.6 114.3 427.5 112.5 439.3 107.4 C451.1 102.3 461.8 92.4 469.3 85.8 C476.8 79.2 480.0 74.2 484.3 67.6 C488.6 60.9 493.5 49.5 495.3 45.9"/><path d="M0.0 82.2 C5.2 82.2 20.4 83.9 31.3 82.2 C42.2 80.4 54.0 75.4 65.3 71.8 C76.6 68.2 88.0 62.5 99.3 60.7 C110.6 58.9 122.6 60.0 133.3 60.9 C144.0 61.9 154.0 64.7 163.3 66.4 C172.6 68.1 179.1 68.5 189.3 71.4 C199.5 74.2 211.8 78.1 224.3 83.5 C236.8 88.9 248.5 97.7 264.3 103.8 C280.1 110.0 304.5 116.8 319.3 120.3 C334.1 123.8 340.1 124.4 353.3 124.6 C366.5 124.8 384.0 123.8 398.3 121.8 C412.6 119.7 427.5 117.5 439.3 112.4 C451.1 107.3 461.8 97.5 469.3 91.0 C476.8 84.5 480.0 79.7 484.3 73.2 C488.6 66.7 493.5 55.7 495.3 52.2"/><path d="M0.0 87.5 C5.2 87.3 20.4 88.2 31.3 86.6 C42.2 84.9 54.0 80.4 65.3 77.3 C76.6 74.3 88.0 69.3 99.3 68.2 C110.6 67.0 122.6 68.8 133.3 70.4 C144.0 71.9 154.0 75.6 163.3 77.4 C172.6 79.2 179.1 79.2 189.3 81.3 C199.5 83.4 211.8 85.8 224.3 89.9 C236.8 94.1 248.5 100.3 264.3 106.1 C280.1 111.8 304.5 120.6 319.3 124.6 C334.1 128.6 340.1 129.6 353.3 130.0 C366.5 130.4 384.0 129.3 398.3 127.2 C412.6 125.1 427.5 122.6 439.3 117.4 C451.1 112.2 461.8 102.6 469.3 96.2 C476.8 89.8 480.0 85.1 484.3 78.8 C488.6 72.5 493.5 61.8 495.3 58.4"/><path d="M0.0 92.8 C5.2 92.5 20.4 92.6 31.3 91.0 C42.2 89.3 54.0 85.5 65.3 82.9 C76.6 80.3 88.0 76.1 99.3 75.5 C110.6 75.0 122.6 77.4 133.3 79.6 C144.0 81.7 154.0 86.3 163.3 88.4 C172.6 90.5 179.1 90.5 189.3 92.0 C199.5 93.6 211.8 94.7 224.3 97.5 C236.8 100.2 248.5 103.3 264.3 108.5 C280.1 113.7 304.5 124.4 319.3 128.9 C334.1 133.4 340.1 134.8 353.3 135.4 C366.5 136.0 384.0 134.8 398.3 132.7 C412.6 130.5 427.5 127.6 439.3 122.4 C451.1 117.2 461.8 107.7 469.3 101.4 C476.8 95.1 480.0 90.5 484.3 84.4 C488.6 78.3 493.5 67.9 495.3 64.7"/><path d="M0.0 98.0 C5.2 97.6 20.4 96.9 31.3 95.3 C42.2 93.7 54.0 90.6 65.3 88.5 C76.6 86.4 88.0 82.8 99.3 82.8 C110.6 82.8 122.6 85.8 133.3 88.6 C144.0 91.4 154.0 96.9 163.3 99.4 C172.6 101.9 179.1 102.4 189.3 103.4 C199.5 104.5 211.8 104.7 224.3 106.0 C236.8 107.2 248.5 106.6 264.3 111.1 C280.1 115.7 304.5 128.3 319.3 133.2 C334.1 138.1 340.1 140.0 353.3 140.8 C366.5 141.6 384.0 140.3 398.3 138.1 C412.6 135.9 427.5 132.7 439.3 127.4 C451.1 122.2 461.8 112.8 469.3 106.6 C476.8 100.4 480.0 96.0 484.3 90.0 C488.6 84.0 493.5 74.1 495.3 70.9"/><path d="M0.0 103.3 C5.2 102.7 20.4 101.3 31.3 99.7 C42.2 98.2 54.0 95.6 65.3 94.0 C76.6 92.4 88.0 89.4 99.3 90.0 C110.6 90.6 122.6 94.1 133.3 97.5 C144.0 100.9 154.0 107.4 163.3 110.4 C172.6 113.4 179.1 114.6 189.3 115.4 C199.5 116.3 211.8 115.6 224.3 115.4 C236.8 115.1 248.5 110.3 264.3 114.0 C280.1 117.7 304.5 132.1 319.3 137.5 C334.1 142.9 340.1 145.2 353.3 146.2 C366.5 147.2 384.0 145.8 398.3 143.5 C412.6 141.2 427.5 137.7 439.3 132.4 C451.1 127.1 461.8 117.9 469.3 111.8 C476.8 105.7 480.0 101.4 484.3 95.6 C488.6 89.8 493.5 80.2 495.3 77.2"/><path d="M0.0 108.6 C5.2 107.8 20.4 105.6 31.3 104.1 C42.2 102.6 54.0 100.7 65.3 99.6 C76.6 98.4 88.0 96.1 99.3 97.2 C110.6 98.3 122.6 102.2 133.3 106.2 C144.0 110.3 154.0 117.8 163.3 121.4 C172.6 125.0 179.1 127.3 189.3 128.0 C199.5 128.7 211.8 127.4 224.3 125.6 C236.8 123.7 248.5 114.3 264.3 117.0 C280.1 119.7 304.5 136.0 319.3 141.8 C334.1 147.6 340.1 150.4 353.3 151.6 C366.5 152.8 384.0 151.4 398.3 149.0 C412.6 146.6 427.5 142.7 439.3 137.4 C451.1 132.1 461.8 123.0 469.3 117.0 C476.8 111.0 480.0 106.8 484.3 101.2 C488.6 95.6 493.5 86.4 495.3 83.4"/><path d="M0.0 113.8 C5.2 112.9 20.4 110.0 31.3 108.5 C42.2 107.1 54.0 105.8 65.3 105.1 C76.6 104.4 88.0 102.7 99.3 104.3 C110.6 105.9 122.6 110.2 133.3 114.9 C144.0 119.5 154.0 128.1 163.3 132.4 C172.6 136.7 179.1 140.3 189.3 141.0 C199.5 141.7 211.8 140.1 224.3 136.6 C236.8 133.1 248.5 118.5 264.3 120.1 C280.1 121.7 304.5 140.0 319.3 146.1 C334.1 152.2 340.1 155.6 353.3 157.0 C366.5 158.4 384.0 156.9 398.3 154.5 C412.6 152.0 427.5 147.8 439.3 142.4 C451.1 137.0 461.8 128.1 469.3 122.2 C476.8 116.3 480.0 112.2 484.3 106.8 C488.6 101.4 493.5 92.5 495.3 89.7"/><path d="M0.0 119.1 C5.2 118.1 20.4 114.3 31.3 112.9 C42.2 111.5 54.0 111.0 65.3 110.7 C76.6 110.5 88.0 109.3 99.3 111.4 C110.6 113.5 122.6 118.1 133.3 123.4 C144.0 128.7 154.0 138.2 163.3 143.4 C172.6 148.6 179.1 153.6 189.3 154.4 C199.5 155.2 211.8 153.6 224.3 148.4 C236.8 143.2 248.5 123.1 264.3 123.4 C280.1 123.7 304.5 143.9 319.3 150.4 C334.1 156.9 340.1 160.8 353.3 162.4 C366.5 164.0 384.0 162.4 398.3 159.9 C412.6 157.4 427.5 152.8 439.3 147.4 C451.1 142.0 461.8 133.2 469.3 127.4 C476.8 121.6 480.0 117.7 484.3 112.4 C488.6 107.2 493.5 98.7 495.3 95.9"/></g><ellipse cx="128" cy="27" rx="22" ry="7" fill="#fff" opacity=".8"/><defs>
<linearGradient id="hg" x1="0" y1="0" x2="1" y2="1"><stop offset="0" stop-color="#fbfbfc"/><stop offset=".55" stop-color="#ededef"/><stop offset="1" stop-color="#dcdee1"/></linearGradient>
<linearGradient id="hg2" x1="0" y1="0" x2="1" y2="0"><stop offset="0" stop-color="#e3e5e7"/><stop offset=".5" stop-color="#f3f4f5"/><stop offset="1" stop-color="#fdfdfd"/></linearGradient>
<filter id="sh" x="-20%" y="-30%" width="140%" height="170%"><feGaussianBlur stdDeviation="2.6"/></filter>
</defs><polygon points="97.48,121.20 112.21,95.40 138.99,95.40 153.72,121.20 138.99,147.00 112.21,147.00" fill="#000" stroke="#000" stroke-width="7.6" stroke-linejoin="round" opacity=".42" filter="url(#sh)" transform="translate(2.4 4.4)"/><polygon points="166.54,122.25 177.84,101.80 371.46,101.80 382.76,122.25 371.46,142.70 177.84,142.70" fill="#000" stroke="#000" stroke-width="7.6" stroke-linejoin="round" opacity=".42" filter="url(#sh)" transform="translate(2.4 4.4)"/><polygon points="97.48,121.20 112.21,95.40 138.99,95.40 153.72,121.20 138.99,147.00 112.21,147.00" fill="#177a78" stroke="#177a78" stroke-width="7.6" stroke-linejoin="round"/><polygon points="99.89,121.20 113.43,97.50 137.77,97.50 151.31,121.20 137.77,144.90 113.43,144.90" fill="url(#hg)" stroke="url(#hg)" stroke-width="2.8" stroke-linejoin="round"/><polygon points="166.54,122.25 177.84,101.80 371.46,101.80 382.76,122.25 371.46,142.70 177.84,142.70" fill="#1a6b84" stroke="#1a6b84" stroke-width="7.6" stroke-linejoin="round"/><polygon points="168.37,122.25 178.79,103.40 370.51,103.40 380.93,122.25 370.51,141.10 178.79,141.10" fill="url(#hg2)" stroke="url(#hg2)" stroke-width="2.8" stroke-linejoin="round"/><g fill="#1a6a88"><circle cx="125.9" cy="110.4" r="6"/><path d="M112.6 135.6 V125 Q112.6 118.6 119.4 117.8 L123.2 117.4 L125.9 121.6 L128.6 117.4 L132.4 117.8 Q139.2 118.6 139.2 125 V135.6Z"/></g><path d="M125.9 120.4 L124.6 118 L127.2 118Z M125.1 121.2 L126.7 121.2 L127.2 129.6 L125.9 131.6 L124.6 129.6Z" fill="#f0f2f4"/><path d="M117.4 135.6 V126.4 M134.4 135.6 V126.4" stroke="#e9eef0" stroke-width=".9"/><ellipse cx="148.7" cy="168.2" rx="9.4" ry="6.8" fill="#1a6a88"/><path d="M145.1 163.8 L153.89999999999998 168.2 L145.1 172.6Z" fill="#fff"/><ellipse cx="283.7" cy="168.2" rx="9.4" ry="6.8" fill="#1a6a88"/><path d="M280.09999999999997 163.8 L288.9 168.2 L280.09999999999997 172.6Z" fill="#fff"/><circle cx="16" cy="19.4" r="11" fill="#2a5a9a"/></svg>
<span class="t" style="top:145px;font-size:2.3px;line-height:3.22px;color:#2a5a9a;left:26.6px;">福建船政交通職業學院</span>
<span class="t" style="top:160px;font-size:2.9px;line-height:4.06px;color:#0f6f72;font-weight:700;left:65.0px;transform:translateX(-50%);">第三讲 求职准备</span>
<span class="t" style="top:167px;font-size:1.7px;line-height:2.38px;color:#888;left:54.400000000000006px;transform:translateX(-50%);">2025-2026-1学期</span>
<span class="t" style="top:167px;font-size:1.7px;line-height:2.38px;color:#888;left:72.0px;transform:translateX(-50%);">就业指导</span>
<span class="t" style="top:176px;font-size:2.3px;line-height:3.22px;color:#0f6f72;font-weight:700;left:60.099999999999994px;transform:translateX(-50%);">主讲：刘露</span>
<svg style="left:21.8px;top:193.2px;" width="77.4" height="43.6" viewBox="0 0 77.4 43.6"><g fill="none" stroke="#7fbcb6" stroke-width=".35" opacity=".8"><path d="M0 13.0 C 14 10.0 24 24.0 38 19.0 S 60 4.0 77.4 8.0" /><path d="M0 14.3 C 14 11.4 24 23.4 38 19.3 S 60 5.1 77.4 9.3" /><path d="M0 15.6 C 14 12.9 24 22.9 38 19.6 S 60 6.3 77.4 10.6" /><path d="M0 16.9 C 14 14.3 24 22.3 38 19.9 S 60 7.4 77.4 11.9" /><path d="M0 18.1 C 14 15.7 24 21.7 38 20.1 S 60 8.6 77.4 13.1" /><path d="M0 19.4 C 14 17.1 24 21.1 38 20.4 S 60 9.7 77.4 14.4" /><path d="M0 20.7 C 14 18.6 24 20.6 38 20.7 S 60 10.9 77.4 15.7" /><path d="M0 22.0 C 14 20.0 24 20.0 38 21.0 S 60 12.0 77.4 17.0" /></g><rect x="7" y="34.6" width="10" height=".9" fill="#5fbdb2"/></svg>
<span class="t" style="top:223px;font-size:3.6px;line-height:5.04px;color:#1b7a7a;font-weight:700;left:28.8px;">目录</span>
<span class="t" style="top:215px;font-size:2.4px;line-height:3.36px;color:#1b7a7a;font-weight:700;left:66.4px;">了解职业含义</span>
<span class="t" style="top:215px;font-size:2.2px;line-height:3.08px;color:#1b7a7a;font-weight:700;left:60.8px;">01</span>
<span class="t" style="top:222px;font-size:2.4px;line-height:3.36px;color:#1b7a7a;font-weight:700;left:66.4px;">职业生涯的准备</span>
<span class="t" style="top:222px;font-size:2.2px;line-height:3.08px;color:#1b7a7a;font-weight:700;left:60.8px;">02</span>
<span class="t" style="top:230px;font-size:2.4px;line-height:3.36px;color:#1b7a7a;font-weight:700;left:66.4px;">职业生涯发展规划方法</span>
<span class="t" style="top:230px;font-size:2.2px;line-height:3.08px;color:#1b7a7a;font-weight:700;left:60.8px;">03</span>
<span class="t" style="top:248px;font-size:3px;line-height:4.2px;color:#333;font-weight:700;left:60.5px;transform:translateX(-50%);">教学目标</span>
<div style="left:33.0px;top:258.2px;width:9.6px;height:9.8px;background:#5fcfc0;border-radius:1.4px;"></div>
<div style="left:35.8px;top:261.2px;width:4px;height:1.2px;background:#e8fffb;"></div>
<div style="left:35.8px;top:263.8px;width:4px;height:1px;background:#e8fffb;"></div>
<div style="left:30.4px;top:272.8px;width:14.8px;height:0.9px;background:#b9c0c4;"></div>
<div style="left:30.4px;top:275.40000000000003px;width:14.8px;height:0.9px;background:#b9c0c4;"></div>
<div style="left:30.4px;top:278.0px;width:8.8px;height:0.9px;background:#b9c0c4;"></div>
<div style="left:55.2px;top:258.2px;width:9.6px;height:9.8px;background:#4f9aa8;border-radius:1.4px;"></div>
<div style="left:58.0px;top:261.2px;width:4px;height:1.2px;background:#e8fffb;"></div>
<div style="left:58.0px;top:263.8px;width:4px;height:1px;background:#e8fffb;"></div>
<div style="left:52.6px;top:272.8px;width:14.8px;height:0.9px;background:#b9c0c4;"></div>
<div style="left:52.6px;top:275.40000000000003px;width:14.8px;height:0.9px;background:#b9c0c4;"></div>
<div style="left:52.6px;top:278.0px;width:8.8px;height:0.9px;background:#b9c0c4;"></div>
<div style="left:77.60000000000001px;top:258.2px;width:9.6px;height:9.8px;background:#5fcfc0;border-radius:1.4px;"></div>
<div style="left:80.4px;top:261.2px;width:4px;height:1.2px;background:#e8fffb;"></div>
<div style="left:80.4px;top:263.8px;width:4px;height:1px;background:#e8fffb;"></div>
<div style="left:75.0px;top:272.8px;width:14.8px;height:0.9px;background:#b9c0c4;"></div>
<div style="left:75.0px;top:275.40000000000003px;width:14.8px;height:0.9px;background:#b9c0c4;"></div>
<div style="left:75.0px;top:278.0px;width:8.8px;height:0.9px;background:#b9c0c4;"></div>
<span class="t" style="top:299px;font-size:3px;line-height:4.2px;color:#333;font-weight:700;left:60.5px;transform:translateX(-50%);">教学重难点</span>
<svg style="left:32.8px;top:305.8px;" width="4" height="3" viewBox="0 0 4 3"><path d="M0 0 H3.6 L0 2.6Z" fill="#1f9a6a"/></svg>
<svg style="left:32.8px;top:316.59999999999997px;" width="4" height="3" viewBox="0 0 4 3"><path d="M0 0 H3.6 L0 2.6Z" fill="#2a5fc0"/></svg>
<span class="t" style="top:308px;font-size:2.3px;line-height:3.22px;color:#1f9a6a;font-weight:700;left:36.8px;">重点：了解职业准备的类型、特点以及中国特</span>
<span class="t" style="top:312px;font-size:2.3px;line-height:3.22px;color:#1f9a6a;font-weight:700;left:36.8px;">色化。</span>
<span class="t" style="top:319px;font-size:2.3px;line-height:3.22px;color:#2a5fc0;font-weight:700;left:36.8px;">难点：掌握职业准备的探索职业的方法，找</span>
<span class="t" style="top:323px;font-size:2.3px;line-height:3.22px;color:#2a5fc0;font-weight:700;left:36.8px;">到职业发展中所要的职业能力，提升个人职业能</span>
<span class="t" style="top:327px;font-size:2.3px;line-height:3.22px;color:#2a5fc0;font-weight:700;left:36.8px;">力，职业素养。</span>
<span class="t" style="top:349px;font-size:2.8px;line-height:3.92px;color:#333;font-weight:700;left:60.5px;transform:translateX(-50%);">教学设计</span>
<div style="left:27.9px;top:353.20000000000005px;width:17px;height:3.4px;background:#bfe9f2;border-radius:1.2px;border:.4px solid #6ab8d0;"></div>
<span class="t" style="top:354px;font-size:1.9px;line-height:2.66px;color:#234;font-weight:700;left:36.4px;transform:translateX(-50%);">教学目标</span>
<div style="left:50.8px;top:353.20000000000005px;width:22px;height:3.4px;background:#bfe9f2;border-radius:1.2px;border:.4px solid #6ab8d0;"></div>
<span class="t" style="top:354px;font-size:1.9px;line-height:2.66px;color:#234;font-weight:700;left:61.8px;transform:translateX(-50%);">教学内容与方法</span>
<div style="left:79.3px;top:353.20000000000005px;width:17px;height:3.4px;background:#bfe9f2;border-radius:1.2px;border:.4px solid #6ab8d0;"></div>
<span class="t" style="top:354px;font-size:1.9px;line-height:2.66px;color:#234;font-weight:700;left:87.8px;transform:translateX(-50%);">学生活动</span>
<div style="left:25.400000000000002px;top:359.20000000000005px;width:20px;height:4px;background:#d2c4ee;border-radius:.6px;"></div>
<div style="left:47.8px;top:359.6px;width:7px;height:3.2px;background:#f2a7b6;border-radius:.6px;"></div>
<div style="left:55.8px;top:359.6px;width:18.6px;height:3.2px;background:#fff;border:.3px solid #d8c8ee;"></div>
<div style="left:57.8px;top:360.40000000000003px;width:11px;height:0.5px;background:#b5b5c2;"></div>
<div style="left:57.8px;top:361.6px;width:8px;height:0.5px;background:#c5c5d0;"></div>
<div style="left:77.2px;top:359.20000000000005px;width:20px;height:4px;background:#d2c4ee;border-radius:.6px;"></div>
<div style="left:26.8px;top:360.40000000000003px;width:14px;height:0.5px;background:#9585bd;"></div>
<div style="left:26.8px;top:361.70000000000005px;width:10px;height:0.5px;background:#a090c5;"></div>
<div style="left:78.8px;top:360.40000000000003px;width:13px;height:0.5px;background:#9585bd;"></div>
<div style="left:78.8px;top:361.70000000000005px;width:9px;height:0.5px;background:#a090c5;"></div>
<div style="left:49.2px;top:360.80000000000007px;width:4px;height:0.6px;background:#c8707e;"></div>
<div style="left:25.400000000000002px;top:364.20000000000005px;width:20px;height:4px;background:#d2c4ee;border-radius:.6px;"></div>
<div style="left:47.8px;top:364.6px;width:7px;height:3.2px;background:#f2a7b6;border-radius:.6px;"></div>
<div style="left:55.8px;top:364.6px;width:18.6px;height:3.2px;background:#fff;border:.3px solid #d8c8ee;"></div>
<div style="left:57.8px;top:365.40000000000003px;width:11px;height:0.5px;background:#b5b5c2;"></div>
<div style="left:57.8px;top:366.6px;width:8px;height:0.5px;background:#c5c5d0;"></div>
<div style="left:77.2px;top:364.20000000000005px;width:20px;height:4px;background:#d2c4ee;border-radius:.6px;"></div>
<div style="left:26.8px;top:365.40000000000003px;width:14px;height:0.5px;background:#9585bd;"></div>
<div style="left:26.8px;top:366.70000000000005px;width:10px;height:0.5px;background:#a090c5;"></div>
<div style="left:78.8px;top:365.40000000000003px;width:13px;height:0.5px;background:#9585bd;"></div>
<div style="left:78.8px;top:366.70000000000005px;width:9px;height:0.5px;background:#a090c5;"></div>
<div style="left:49.2px;top:365.80000000000007px;width:4px;height:0.6px;background:#c8707e;"></div>
<div style="left:25.400000000000002px;top:369.20000000000005px;width:20px;height:4px;background:#d2c4ee;border-radius:.6px;"></div>
<div style="left:47.8px;top:369.6px;width:7px;height:3.2px;background:#f2a7b6;border-radius:.6px;"></div>
<div style="left:55.8px;top:369.6px;width:18.6px;height:3.2px;background:#fff;border:.3px solid #d8c8ee;"></div>
<div style="left:57.8px;top:370.40000000000003px;width:11px;height:0.5px;background:#b5b5c2;"></div>
<div style="left:57.8px;top:371.6px;width:8px;height:0.5px;background:#c5c5d0;"></div>
<div style="left:77.2px;top:369.20000000000005px;width:20px;height:4px;background:#d2c4ee;border-radius:.6px;"></div>
<div style="left:26.8px;top:370.40000000000003px;width:14px;height:0.5px;background:#9585bd;"></div>
<div style="left:26.8px;top:371.70000000000005px;width:10px;height:0.5px;background:#a090c5;"></div>
<div style="left:78.8px;top:370.40000000000003px;width:13px;height:0.5px;background:#9585bd;"></div>
<div style="left:78.8px;top:371.70000000000005px;width:9px;height:0.5px;background:#a090c5;"></div>
<div style="left:49.2px;top:370.80000000000007px;width:4px;height:0.6px;background:#c8707e;"></div>
<div style="left:25.400000000000002px;top:374.20000000000005px;width:20px;height:4px;background:#d2c4ee;border-radius:.6px;"></div>
<div style="left:47.8px;top:374.6px;width:7px;height:3.2px;background:#f2a7b6;border-radius:.6px;"></div>
<div style="left:55.8px;top:374.6px;width:18.6px;height:3.2px;background:#fff;border:.3px solid #d8c8ee;"></div>
<div style="left:57.8px;top:375.40000000000003px;width:11px;height:0.5px;background:#b5b5c2;"></div>
<div style="left:57.8px;top:376.6px;width:8px;height:0.5px;background:#c5c5d0;"></div>
<div style="left:77.2px;top:374.20000000000005px;width:20px;height:4px;background:#d2c4ee;border-radius:.6px;"></div>
<div style="left:26.8px;top:375.40000000000003px;width:14px;height:0.5px;background:#9585bd;"></div>
<div style="left:26.8px;top:376.70000000000005px;width:10px;height:0.5px;background:#a090c5;"></div>
<div style="left:78.8px;top:375.40000000000003px;width:13px;height:0.5px;background:#9585bd;"></div>
<div style="left:78.8px;top:376.70000000000005px;width:9px;height:0.5px;background:#a090c5;"></div>
<div style="left:49.2px;top:375.80000000000007px;width:4px;height:0.6px;background:#c8707e;"></div>
<div style="left:25.400000000000002px;top:379.20000000000005px;width:20px;height:4px;background:#d2c4ee;border-radius:.6px;"></div>
<div style="left:47.8px;top:379.6px;width:7px;height:3.2px;background:#f2a7b6;border-radius:.6px;"></div>
<div style="left:55.8px;top:379.6px;width:18.6px;height:3.2px;background:#fff;border:.3px solid #d8c8ee;"></div>
<div style="left:57.8px;top:380.40000000000003px;width:11px;height:0.5px;background:#b5b5c2;"></div>
<div style="left:57.8px;top:381.6px;width:8px;height:0.5px;background:#c5c5d0;"></div>
<div style="left:77.2px;top:379.20000000000005px;width:20px;height:4px;background:#d2c4ee;border-radius:.6px;"></div>
<div style="left:26.8px;top:380.40000000000003px;width:14px;height:0.5px;background:#9585bd;"></div>
<div style="left:26.8px;top:381.70000000000005px;width:10px;height:0.5px;background:#a090c5;"></div>
<div style="left:78.8px;top:380.40000000000003px;width:13px;height:0.5px;background:#9585bd;"></div>
<div style="left:78.8px;top:381.70000000000005px;width:9px;height:0.5px;background:#a090c5;"></div>
<div style="left:49.2px;top:380.80000000000007px;width:4px;height:0.6px;background:#c8707e;"></div>
<div style="left:21.8px;top:387.0px;width:77.4px;height:1.2px;background:#8ad9d0;"></div>
<div style="left:27.799999999999997px;top:398.6px;width:5.2px;height:8.6px;background:#eef1f4;border:.4px solid #cfd5da;border-radius:.8px;"></div>
<div style="left:29.2px;top:401px;width:2.4px;height:0.6px;background:#99a;"></div>
<div style="left:29.2px;top:402.6px;width:2.4px;height:0.6px;background:#99a;"></div>
<div style="left:43.0px;top:398.6px;width:5.2px;height:8.6px;background:#eef1f4;border:.4px solid #cfd5da;border-radius:.8px;"></div>
<div style="left:44.4px;top:401px;width:2.4px;height:0.6px;background:#99a;"></div>
<div style="left:44.4px;top:402.6px;width:2.4px;height:0.6px;background:#99a;"></div>
<div style="left:58.4px;top:398.6px;width:5.2px;height:8.6px;background:#eef1f4;border:.4px solid #cfd5da;border-radius:.8px;"></div>
<div style="left:59.8px;top:401px;width:2.4px;height:0.6px;background:#99a;"></div>
<div style="left:59.8px;top:402.6px;width:2.4px;height:0.6px;background:#99a;"></div>
<svg style="left:25.2px;top:408.4px;" width="50" height="4.6" viewBox="0 0 50 4.6"><path d="M2 0 H8.6 L10.2 4.6 H3.6Z" fill="#4f86e0"/><path d="M10 0 H16.6 L18.2 4.6 H11.6Z" fill="#4f86e0"/><path d="M18 0 H24.6 L26.2 4.6 H19.6Z" fill="#4f86e0"/><path d="M26 0 H32.6 L34.2 4.6 H27.6Z" fill="#4f86e0"/><path d="M34 0 H40.6 L42.2 4.6 H35.6Z" fill="#4f86e0"/><path d="M42 0 H48.6 L50.2 4.6 H43.6Z" fill="#4f86e0"/></svg>
<div style="left:5px;top:413px;width:107px;height:20.2px;background:#d4e1e8;"></div>
<svg style="left:54.4px;top:418.6px;" width="5.2" height="5.2" viewBox="0 0 5.2 5.2"><path d="M2.6 .2 V5 M.2 2.6 H5" stroke="#333" stroke-width=".7"/></svg>
<div style="left:120.7px;top:128.6px;width:495px;height:279.4px;background:#ffffff;box-shadow:0 0 1.5px rgba(90,110,125,.45);"></div>
<svg style="left:120.7px;top:128.6px;overflow:hidden;" width="495" height="279.4" viewBox="0 0 495 279.4"><g fill="none" stroke="#4fa39c" stroke-width="0.95" opacity=".8"><path d="M0.0 66.4 C5.2 66.8 20.4 70.9 31.3 69.0 C42.2 67.1 54.0 60.4 65.3 55.1 C76.6 49.8 88.0 41.4 99.3 37.0 C110.6 32.6 122.6 29.6 133.3 29.0 C144.0 28.4 154.0 30.0 163.3 33.4 C172.6 36.8 179.1 42.9 189.3 49.4 C199.5 55.9 211.8 64.1 224.3 72.4 C236.8 80.7 248.5 93.6 264.3 99.4 C280.1 105.2 304.5 105.9 319.3 107.4 C334.1 108.9 340.1 108.7 353.3 108.4 C366.5 108.1 384.0 107.2 398.3 105.4 C412.6 103.6 427.5 102.4 439.3 97.4 C451.1 92.4 461.8 82.2 469.3 75.4 C476.8 68.6 480.0 63.4 484.3 56.4 C488.6 49.4 493.5 37.2 495.3 33.4"/><path d="M0.0 71.7 C5.2 72.0 20.4 75.2 31.3 73.4 C42.2 71.6 54.0 65.3 65.3 60.7 C76.6 56.0 88.0 48.6 99.3 45.3 C110.6 42.1 122.6 41.0 133.3 40.9 C144.0 40.7 154.0 42.1 163.3 44.4 C172.6 46.7 179.1 49.7 189.3 54.7 C199.5 59.6 211.8 66.7 224.3 74.3 C236.8 81.9 248.5 94.1 264.3 100.4 C280.1 106.6 304.5 109.5 319.3 111.7 C334.1 113.9 340.1 113.9 353.3 113.8 C366.5 113.7 384.0 112.8 398.3 110.8 C412.6 108.9 427.5 107.4 439.3 102.4 C451.1 97.4 461.8 87.3 469.3 80.6 C476.8 73.9 480.0 68.8 484.3 62.0 C488.6 55.2 493.5 43.4 495.3 39.7"/><path d="M0.0 76.9 C5.2 77.1 20.4 79.6 31.3 77.8 C42.2 76.0 54.0 70.3 65.3 66.2 C76.6 62.1 88.0 55.6 99.3 53.1 C110.6 50.6 122.6 50.8 133.3 51.2 C144.0 51.6 154.0 53.5 163.3 55.4 C172.6 57.3 179.1 58.6 189.3 62.4 C199.5 66.2 211.8 71.6 224.3 78.2 C236.8 84.8 248.5 95.6 264.3 101.9 C280.1 108.2 304.5 113.1 319.3 116.0 C334.1 118.9 340.1 119.2 353.3 119.2 C366.5 119.3 384.0 118.3 398.3 116.3 C412.6 114.3 427.5 112.5 439.3 107.4 C451.1 102.3 461.8 92.4 469.3 85.8 C476.8 79.2 480.0 74.2 484.3 67.6 C488.6 60.9 493.5 49.5 495.3 45.9"/><path d="M0.0 82.2 C5.2 82.2 20.4 83.9 31.3 82.2 C42.2 80.4 54.0 75.4 65.3 71.8 C76.6 68.2 88.0 62.5 99.3 60.7 C110.6 58.9 122.6 60.0 133.3 60.9 C144.0 61.9 154.0 64.7 163.3 66.4 C172.6 68.1 179.1 68.5 189.3 71.4 C199.5 74.2 211.8 78.1 224.3 83.5 C236.8 88.9 248.5 97.7 264.3 103.8 C280.1 110.0 304.5 116.8 319.3 120.3 C334.1 123.8 340.1 124.4 353.3 124.6 C366.5 124.8 384.0 123.8 398.3 121.8 C412.6 119.7 427.5 117.5 439.3 112.4 C451.1 107.3 461.8 97.5 469.3 91.0 C476.8 84.5 480.0 79.7 484.3 73.2 C488.6 66.7 493.5 55.7 495.3 52.2"/><path d="M0.0 87.5 C5.2 87.3 20.4 88.2 31.3 86.6 C42.2 84.9 54.0 80.4 65.3 77.3 C76.6 74.3 88.0 69.3 99.3 68.2 C110.6 67.0 122.6 68.8 133.3 70.4 C144.0 71.9 154.0 75.6 163.3 77.4 C172.6 79.2 179.1 79.2 189.3 81.3 C199.5 83.4 211.8 85.8 224.3 89.9 C236.8 94.1 248.5 100.3 264.3 106.1 C280.1 111.8 304.5 120.6 319.3 124.6 C334.1 128.6 340.1 129.6 353.3 130.0 C366.5 130.4 384.0 129.3 398.3 127.2 C412.6 125.1 427.5 122.6 439.3 117.4 C451.1 112.2 461.8 102.6 469.3 96.2 C476.8 89.8 480.0 85.1 484.3 78.8 C488.6 72.5 493.5 61.8 495.3 58.4"/><path d="M0.0 92.8 C5.2 92.5 20.4 92.6 31.3 91.0 C42.2 89.3 54.0 85.5 65.3 82.9 C76.6 80.3 88.0 76.1 99.3 75.5 C110.6 75.0 122.6 77.4 133.3 79.6 C144.0 81.7 154.0 86.3 163.3 88.4 C172.6 90.5 179.1 90.5 189.3 92.0 C199.5 93.6 211.8 94.7 224.3 97.5 C236.8 100.2 248.5 103.3 264.3 108.5 C280.1 113.7 304.5 124.4 319.3 128.9 C334.1 133.4 340.1 134.8 353.3 135.4 C366.5 136.0 384.0 134.8 398.3 132.7 C412.6 130.5 427.5 127.6 439.3 122.4 C451.1 117.2 461.8 107.7 469.3 101.4 C476.8 95.1 480.0 90.5 484.3 84.4 C488.6 78.3 493.5 67.9 495.3 64.7"/><path d="M0.0 98.0 C5.2 97.6 20.4 96.9 31.3 95.3 C42.2 93.7 54.0 90.6 65.3 88.5 C76.6 86.4 88.0 82.8 99.3 82.8 C110.6 82.8 122.6 85.8 133.3 88.6 C144.0 91.4 154.0 96.9 163.3 99.4 C172.6 101.9 179.1 102.4 189.3 103.4 C199.5 104.5 211.8 104.7 224.3 106.0 C236.8 107.2 248.5 106.6 264.3 111.1 C280.1 115.7 304.5 128.3 319.3 133.2 C334.1 138.1 340.1 140.0 353.3 140.8 C366.5 141.6 384.0 140.3 398.3 138.1 C412.6 135.9 427.5 132.7 439.3 127.4 C451.1 122.2 461.8 112.8 469.3 106.6 C476.8 100.4 480.0 96.0 484.3 90.0 C488.6 84.0 493.5 74.1 495.3 70.9"/><path d="M0.0 103.3 C5.2 102.7 20.4 101.3 31.3 99.7 C42.2 98.2 54.0 95.6 65.3 94.0 C76.6 92.4 88.0 89.4 99.3 90.0 C110.6 90.6 122.6 94.1 133.3 97.5 C144.0 100.9 154.0 107.4 163.3 110.4 C172.6 113.4 179.1 114.6 189.3 115.4 C199.5 116.3 211.8 115.6 224.3 115.4 C236.8 115.1 248.5 110.3 264.3 114.0 C280.1 117.7 304.5 132.1 319.3 137.5 C334.1 142.9 340.1 145.2 353.3 146.2 C366.5 147.2 384.0 145.8 398.3 143.5 C412.6 141.2 427.5 137.7 439.3 132.4 C451.1 127.1 461.8 117.9 469.3 111.8 C476.8 105.7 480.0 101.4 484.3 95.6 C488.6 89.8 493.5 80.2 495.3 77.2"/><path d="M0.0 108.6 C5.2 107.8 20.4 105.6 31.3 104.1 C42.2 102.6 54.0 100.7 65.3 99.6 C76.6 98.4 88.0 96.1 99.3 97.2 C110.6 98.3 122.6 102.2 133.3 106.2 C144.0 110.3 154.0 117.8 163.3 121.4 C172.6 125.0 179.1 127.3 189.3 128.0 C199.5 128.7 211.8 127.4 224.3 125.6 C236.8 123.7 248.5 114.3 264.3 117.0 C280.1 119.7 304.5 136.0 319.3 141.8 C334.1 147.6 340.1 150.4 353.3 151.6 C366.5 152.8 384.0 151.4 398.3 149.0 C412.6 146.6 427.5 142.7 439.3 137.4 C451.1 132.1 461.8 123.0 469.3 117.0 C476.8 111.0 480.0 106.8 484.3 101.2 C488.6 95.6 493.5 86.4 495.3 83.4"/><path d="M0.0 113.8 C5.2 112.9 20.4 110.0 31.3 108.5 C42.2 107.1 54.0 105.8 65.3 105.1 C76.6 104.4 88.0 102.7 99.3 104.3 C110.6 105.9 122.6 110.2 133.3 114.9 C144.0 119.5 154.0 128.1 163.3 132.4 C172.6 136.7 179.1 140.3 189.3 141.0 C199.5 141.7 211.8 140.1 224.3 136.6 C236.8 133.1 248.5 118.5 264.3 120.1 C280.1 121.7 304.5 140.0 319.3 146.1 C334.1 152.2 340.1 155.6 353.3 157.0 C366.5 158.4 384.0 156.9 398.3 154.5 C412.6 152.0 427.5 147.8 439.3 142.4 C451.1 137.0 461.8 128.1 469.3 122.2 C476.8 116.3 480.0 112.2 484.3 106.8 C488.6 101.4 493.5 92.5 495.3 89.7"/><path d="M0.0 119.1 C5.2 118.1 20.4 114.3 31.3 112.9 C42.2 111.5 54.0 111.0 65.3 110.7 C76.6 110.5 88.0 109.3 99.3 111.4 C110.6 113.5 122.6 118.1 133.3 123.4 C144.0 128.7 154.0 138.2 163.3 143.4 C172.6 148.6 179.1 153.6 189.3 154.4 C199.5 155.2 211.8 153.6 224.3 148.4 C236.8 143.2 248.5 123.1 264.3 123.4 C280.1 123.7 304.5 143.9 319.3 150.4 C334.1 156.9 340.1 160.8 353.3 162.4 C366.5 164.0 384.0 162.4 398.3 159.9 C412.6 157.4 427.5 152.8 439.3 147.4 C451.1 142.0 461.8 133.2 469.3 127.4 C476.8 121.6 480.0 117.7 484.3 112.4 C488.6 107.2 493.5 98.7 495.3 95.9"/></g><ellipse cx="128" cy="27" rx="22" ry="7" fill="#fff" opacity=".8"/><defs>
<linearGradient id="hg" x1="0" y1="0" x2="1" y2="1"><stop offset="0" stop-color="#fbfbfc"/><stop offset=".55" stop-color="#ededef"/><stop offset="1" stop-color="#dcdee1"/></linearGradient>
<linearGradient id="hg2" x1="0" y1="0" x2="1" y2="0"><stop offset="0" stop-color="#e3e5e7"/><stop offset=".5" stop-color="#f3f4f5"/><stop offset="1" stop-color="#fdfdfd"/></linearGradient>
<filter id="sh" x="-20%" y="-30%" width="140%" height="170%"><feGaussianBlur stdDeviation="2.6"/></filter>
</defs><polygon points="97.48,121.20 112.21,95.40 138.99,95.40 153.72,121.20 138.99,147.00 112.21,147.00" fill="#000" stroke="#000" stroke-width="7.6" stroke-linejoin="round" opacity=".42" filter="url(#sh)" transform="translate(2.4 4.4)"/><polygon points="166.54,122.25 177.84,101.80 371.46,101.80 382.76,122.25 371.46,142.70 177.84,142.70" fill="#000" stroke="#000" stroke-width="7.6" stroke-linejoin="round" opacity=".42" filter="url(#sh)" transform="translate(2.4 4.4)"/><polygon points="97.48,121.20 112.21,95.40 138.99,95.40 153.72,121.20 138.99,147.00 112.21,147.00" fill="#177a78" stroke="#177a78" stroke-width="7.6" stroke-linejoin="round"/><polygon points="99.89,121.20 113.43,97.50 137.77,97.50 151.31,121.20 137.77,144.90 113.43,144.90" fill="url(#hg)" stroke="url(#hg)" stroke-width="2.8" stroke-linejoin="round"/><polygon points="166.54,122.25 177.84,101.80 371.46,101.80 382.76,122.25 371.46,142.70 177.84,142.70" fill="#1a6b84" stroke="#1a6b84" stroke-width="7.6" stroke-linejoin="round"/><polygon points="168.37,122.25 178.79,103.40 370.51,103.40 380.93,122.25 370.51,141.10 178.79,141.10" fill="url(#hg2)" stroke="url(#hg2)" stroke-width="2.8" stroke-linejoin="round"/><g fill="#1a6a88"><circle cx="125.9" cy="110.4" r="6"/><path d="M112.6 135.6 V125 Q112.6 118.6 119.4 117.8 L123.2 117.4 L125.9 121.6 L128.6 117.4 L132.4 117.8 Q139.2 118.6 139.2 125 V135.6Z"/></g><path d="M125.9 120.4 L124.6 118 L127.2 118Z M125.1 121.2 L126.7 121.2 L127.2 129.6 L125.9 131.6 L124.6 129.6Z" fill="#f0f2f4"/><path d="M117.4 135.6 V126.4 M134.4 135.6 V126.4" stroke="#e9eef0" stroke-width=".9"/><ellipse cx="148.7" cy="168.2" rx="9.4" ry="6.8" fill="#1a6a88"/><path d="M145.1 163.8 L153.89999999999998 168.2 L145.1 172.6Z" fill="#fff"/><ellipse cx="283.7" cy="168.2" rx="9.4" ry="6.8" fill="#1a6a88"/><path d="M280.09999999999997 163.8 L288.9 168.2 L280.09999999999997 172.6Z" fill="#fff"/></svg>
<svg style="left:125.4px;top:136.8px;" width="22.6" height="22.6" viewBox="0 0 22.6 22.6"><circle cx="11.3" cy="11.3" r="11" fill="#e9eff7" stroke="#2a5a9a" stroke-width=".6"/><circle cx="11.3" cy="11.3" r="8.6" fill="#f7f9fc" stroke="#2a5a9a" stroke-width="1.6" stroke-dasharray=".9 .7"/><circle cx="11.3" cy="11.3" r="6.8" fill="#2a5a9a"/><path d="M7.6 8.4 H15 L14 10.6 H8.6Z" fill="#fff"/><path d="M6.2 11.6 H16.4 L14.6 14.6 H8Z" fill="#fff"/><path d="M6.4 15.6 Q11.3 18 16.2 15.6" stroke="#fff" stroke-width=".7" fill="none"/><path d="M11.3 5.6 V8.4" stroke="#fff" stroke-width=".7"/></svg>
<span class="t" style="top:140px;font-size:13.6px;line-height:19.04px;color:#1f4f8f;font-weight:700;left:150.6px;font-family:'Liberation Serif','Noto Serif CJK SC',serif;font-style:italic;letter-spacing:1.6px;transform:skewX(-8deg);transform-origin:left center;">福建船政交通職業學院</span>
<span class="t" style="top:239px;font-size:19px;line-height:26.6px;color:#0f6f72;font-weight:700;left:326.4px;letter-spacing:-.5px;">第三讲</span>
<span class="t" style="top:239px;font-size:19px;line-height:26.6px;color:#0f6f72;font-weight:700;left:393.2px;letter-spacing:-.5px;">求职准备</span>
<span class="t" style="top:291px;font-size:10.9px;line-height:15.26px;color:#7d7d7d;left:286px;">2025-2026-1学期</span>
<span class="t" style="top:291px;font-size:10.8px;line-height:15.12px;color:#7d7d7d;left:420.2px;">就业指导</span>
<span class="t" style="top:341px;font-size:14.7px;line-height:20.58px;color:#0f6f72;font-weight:700;left:365.2px;transform:translateX(-50%);">主讲：刘露</span>
<div style="left:112.9px;top:419.2px;width:520.6px;height:0.5px;background:#d3dde3;"></div>
<span class="t" style="top:422px;font-size:5.5px;line-height:7.7px;color:#a3a9ad;left:117.2px;">单击此处添加备注</span>
<div style="left:626.8px;top:125.4px;width:2.4px;height:14px;background:#b9c0c5;border-radius:1.2px;"></div>
<svg style="left:626.6px;top:120.6px;" width="3" height="2.4" viewBox="0 0 3 2.4"><path d="M1.5 .2 L2.8 2 H.2Z" fill="#666"/></svg>
<svg style="left:626.6px;top:384.6px;" width="3" height="2.4" viewBox="0 0 3 2.4"><path d="M1.5 2 L2.8 .2 H.2Z" fill="#666"/></svg>
<svg style="left:626.4px;top:389.4px;" width="3.4" height="3.4" viewBox="0 0 3.4 3.4"><path d="M.3 .6 H3.1 M.3 2.8 H3.1 M1.7 .8 V2.6" stroke="#666" stroke-width=".55"/></svg>
<svg style="left:626.4px;top:394.4px;" width="3.4" height="3.4" viewBox="0 0 3.4 3.4"><path d="M.3 .6 H3.1 M.3 2.8 H3.1 M1.7 .8 V2.6" stroke="#666" stroke-width=".55"/></svg>
<div style="left:640.4px;top:126.6px;width:4.4px;height:0.7px;background:#666;"></div>
<div style="left:640.4px;top:136.6px;width:5.6px;height:5.8px;border:.6px solid #6a7075;border-radius:1.4px;"></div>
<span class="t" style="top:146px;font-size:4.2px;line-height:5.88px;color:#333;left:643.4px;transform:translateX(-50%);">属性</span>
<div style="left:640.4px;top:158.8px;width:5.6px;height:5.8px;border:.6px solid #6a7075;border-radius:1.4px;"></div>
<span class="t" style="top:169px;font-size:4.2px;line-height:5.88px;color:#333;left:643.4px;transform:translateX(-50%);">动画</span>
<div style="left:640.4px;top:181.2px;width:5.6px;height:5.8px;border:.6px solid #6a7075;border-radius:1.4px;"></div>
<span class="t" style="top:191px;font-size:4.2px;line-height:5.88px;color:#333;left:643.4px;transform:translateX(-50%);">切换</span>
<div style="left:640.4px;top:203.4px;width:5.6px;height:5.8px;border:.6px solid #6a7075;border-radius:1.4px;"></div>
<span class="t" style="top:213px;font-size:4.2px;line-height:5.88px;color:#333;left:643.4px;transform:translateX(-50%);">美化</span>
<div style="left:640.4px;top:225.8px;width:5.6px;height:5.8px;border:.6px solid #6a7075;border-radius:1.4px;"></div>
<span class="t" style="top:235px;font-size:4.2px;line-height:5.88px;color:#333;left:643.4px;transform:translateX(-50%);">主题</span>
<div style="left:640.4px;top:248px;width:5.6px;height:5.8px;border:.6px solid #6a7075;border-radius:1.4px;"></div>
<span class="t" style="top:258px;font-size:4.2px;line-height:5.88px;color:#333;left:643.4px;transform:translateX(-50%);">稻壳</span>
<div style="left:640.4px;top:270.2px;width:5.6px;height:5.8px;border:.6px solid #6a7075;border-radius:1.4px;"></div>
<span class="t" style="top:280px;font-size:4.2px;line-height:5.88px;color:#333;left:643.4px;transform:translateX(-50%);">文库</span>
<div style="left:640.4px;top:292px;width:5.6px;height:5.8px;border:.6px solid #6a7075;border-radius:1.4px;"></div>
<span class="t" style="top:301px;font-size:4.2px;line-height:5.88px;color:#333;left:643.4px;transform:translateX(-50%);">帮助</span>
<div style="left:640.6px;top:292.2px;width:6px;height:6px;background:#edf1f4;border:.6px solid #6a7075;border-radius:3px;"></div>
<span class="t" style="top:294px;font-size:4px;line-height:5.6px;color:#444;left:643.6px;transform:translateX(-50%);">?</span>
<div style="left:641px;top:316.2px;width:1px;height:1px;background:#555;border-radius:.5px;"></div>
<div style="left:642.9px;top:316.2px;width:1px;height:1px;background:#555;border-radius:.5px;"></div>
<div style="left:644.8px;top:316.2px;width:1px;height:1px;background:#555;border-radius:.5px;"></div>
<span class="t" style="top:323px;font-size:4.2px;line-height:5.88px;color:#333;left:643.4px;transform:translateX(-50%);">设置</span>
<div style="left:641.4px;top:241.8px;width:12.4px;height:34.6px;background:#484848;border-radius:1.6px;"></div>
<svg style="left:645.6px;top:254.4px;" width="4.6" height="9" viewBox="0 0 4.6 9"><path d="M.8 .8 L3.8 4.5 L.8 8.2" stroke="#fff" stroke-width=".9" fill="none"/></svg>
<div style="left:601.4px;top:294.4px;width:30.6px;height:11px;background:#fff;border-radius:1.6px;box-shadow:0 .4px 1.6px rgba(0,0,0,.28);"></div>
<span class="t" style="top:298px;font-size:4.2px;line-height:5.88px;color:#333;left:616.6px;transform:translateX(-50%);">帮助中心</span>
<svg style="left:647px;top:299.6px;" width="4" height="5.6" viewBox="0 0 4 5.6"><path d="M.4 .3 L.4 4.6 L1.5 3.7 L2.3 5.4 L3 5.1 L2.3 3.5 L3.6 3.4Z" fill="#fff" stroke="#222" stroke-width=".45"/></svg>
<div style="left:3.3px;top:433.2px;width:651px;height:9.6px;background:#dbe6ec;"></div>
<div style="left:3.3px;top:433px;width:651px;height:0.6px;background:#cfd9df;"></div>
<span class="t" style="top:436px;font-size:5.1px;line-height:7.14px;color:#333;left:8px;">幻灯片 1 / 66</span>
<div style="left:42.6px;top:435.59999999999997px;width:0.5px;height:5.6px;background:#cfd5d9;"></div>
<svg style="left:47.6px;top:435.59999999999997px;" width="5.6" height="5.6" viewBox="0 0 5.6 5.6"><path d="M1 .6 V3.4 Q1 4.4 2 4.4 H3.6 Q4.6 4.4 4.6 3.4 V.6 M2.8 .6 V2.4" stroke="#555" stroke-width=".6" fill="none"/></svg>
<span class="t" style="top:436px;font-size:5.15px;line-height:7.21px;color:#333;left:56px;">1_Office 主题</span>
<div style="left:93.6px;top:435.59999999999997px;width:0.5px;height:5.6px;background:#cfd5d9;"></div>
<div style="left:100px;top:435.4px;width:4.8px;height:5.8px;border:.6px solid #6f757a;border-radius:.8px;"></div>
<span class="t" style="top:436px;font-size:4.9px;line-height:6.86px;color:#333;left:108px;">校对</span>
<svg style="left:130.6px;top:436.0px;" width="5.4" height="5" viewBox="0 0 5.4 5"><path d="M2.7 .3 L5.2 4.6 H.2Z" fill="#f0a020"/></svg>
<span class="t" style="top:436px;font-size:4.9px;line-height:6.86px;color:#333;left:139px;">缺失字体</span>
<svg style="left:361px;top:435.59999999999997px;" width="6" height="6" viewBox="0 0 6 6"><circle cx="3" cy="3" r="2.4" fill="none" stroke="#555" stroke-width=".6"/><path d="M.8 2.4 H5.2" stroke="#555" stroke-width=".5"/></svg>
<span class="t" style="top:436px;font-size:4.8px;line-height:6.72px;color:#333;left:369px;">智能美化</span>
<svg style="left:392px;top:437.9px;" width="2.6" height="1.8" viewBox="0 0 2.6 1.8"><path d="M0 0 H2.6 L1.3 1.6Z" fill="#555"/></svg>
<div style="left:400px;top:435.59999999999997px;width:0.5px;height:5.6px;background:#cfd5d9;"></div>
<svg style="left:407px;top:435.59999999999997px;" width="5.6" height="5.6" viewBox="0 0 5.6 5.6"><path d="M.3 .8 H5.3 M.3 2.8 H5.3 M.3 4.8 H5.3" stroke="#555" stroke-width=".6"/></svg>
<span class="t" style="top:436px;font-size:4.8px;line-height:6.72px;color:#333;left:415px;">备注</span>
<svg style="left:427px;top:437.9px;" width="2.6" height="1.8" viewBox="0 0 2.6 1.8"><path d="M0 0 H2.6 L1.3 1.6Z" fill="#555"/></svg>
<svg style="left:438px;top:435.4px;" width="6" height="6" viewBox="0 0 6 6"><path d="M.5 4.4 V.5 H5.5 V4.4 M.5 4.4 H1.6 V5.6 L2.8 4.4" fill="none" stroke="#555" stroke-width=".6"/><path d="M4.6 3.4 V5.4 M3.6 4.4 H5.6" stroke="#555" stroke-width=".5"/></svg>
<span class="t" style="top:436px;font-size:4.8px;line-height:6.72px;color:#333;left:447px;">批注</span>
<div style="left:466.6px;top:434.09999999999997px;width:9.2px;height:8.8px;background:#d0d7dc;border-radius:1.2px;"></div>
<div style="left:468.4px;top:435.79999999999995px;width:5.6px;height:5.2px;border:.6px solid #6f757a;border-radius:.8px;"></div>
<div style="left:469.9px;top:436.0px;width:0.6px;height:4.8px;background:#555;"></div>
<svg style="left:482.6px;top:435.59999999999997px;" width="5.6" height="5.6" viewBox="0 0 5.6 5.6"><rect x=".4" y=".4" width="1.9" height="1.9" rx=".4" fill="none" stroke="#555" stroke-width=".55"/><rect x="3.3" y=".4" width="1.9" height="1.9" rx=".4" fill="none" stroke="#555" stroke-width=".55"/><rect x=".4" y="3.3" width="1.9" height="1.9" rx=".4" fill="none" stroke="#555" stroke-width=".55"/><rect x="3.3" y="3.3" width="1.9" height="1.9" rx=".4" fill="none" stroke="#555" stroke-width=".55"/></svg>
<div style="left:495.8px;top:435.79999999999995px;width:5.4px;height:5.2px;border:.6px solid #6f757a;border-radius:1.2px;"></div>
<div style="left:498.1px;top:436.79999999999995px;width:0.6px;height:2.2px;background:#555;"></div>
<div style="left:512.2px;top:434.79999999999995px;width:7.8px;height:7.2px;background:#ee6f1e;border-radius:1.2px;"></div>
<svg style="left:514.5px;top:436.5px;" width="3.6" height="3.8" viewBox="0 0 3.6 3.8"><path d="M.4 .3 L3.3 1.9 L.4 3.5Z" fill="#fff"/></svg>
<svg style="left:523px;top:437.9px;" width="2.6" height="1.8" viewBox="0 0 2.6 1.8"><path d="M0 0 H2.6 L1.3 1.6Z" fill="#555"/></svg>
<svg style="left:536.4px;top:435.4px;" width="6" height="6" viewBox="0 0 6 6"><path d="M.4 1.8 V.4 H1.8 M4.2 .4 H5.6 V1.8 M5.6 4.2 V5.6 H4.2 M1.8 5.6 H.4 V4.2 M2 2 L4 4 M4 2 L2 4" stroke="#555" stroke-width=".55" fill="none"/></svg>
<span class="t" style="top:437px;font-size:4.6px;line-height:6.44px;color:#333;left:553.6px;">91%</span>
<svg style="left:570.4px;top:437.9px;" width="2.6" height="1.8" viewBox="0 0 2.6 1.8"><path d="M0 0 H2.6 L1.3 1.6Z" fill="#555"/></svg>
<div style="left:581.2px;top:438.0px;width:4px;height:0.8px;background:#333;"></div>
<div style="left:591.3px;top:438.09999999999997px;width:48px;height:0.7px;background:#c3c9cd;"></div>
<div style="left:591.3px;top:437.9px;width:18.4px;height:1px;background:#4f86e8;"></div>
<div style="left:611.2px;top:437.2px;width:0.7px;height:1.8px;background:#d66;"></div>
<svg style="left:642.9px;top:436.09999999999997px;" width="4.6" height="4.6" viewBox="0 0 4.6 4.6"><path d="M2.3 .2 V4.4 M.2 2.3 H4.4" stroke="#333" stroke-width=".8"/></svg>
<div style="left:3.3px;top:442.6px;width:651px;height:20.1px;background:linear-gradient(90deg,#c3d3dc 0%,#d6e3ea 20%,#e3edf2 45%,#d9e6ec 70%,#c2d3dc 100%);"></div>
<svg style="left:9.4px;top:445.4px;" width="15" height="14" viewBox="0 0 15 14"><circle cx="5" cy="6.6" r="2.6" fill="#f5b13a"/><path d="M2.6 12.4 Q.6 12.2 .8 10.4 Q1.2 8.8 3 9 Q3.6 6.6 6.2 6.8 Q8.4 7 8.8 9.2 Q10.8 9.2 10.8 10.9 Q10.7 12.4 9 12.4Z" fill="#dfe9f3" stroke="#a9bcd0" stroke-width=".4"/><circle cx="9" cy="3.6" r="2.9" fill="#d93025"/></svg>
<span class="t" style="top:448px;font-size:3.6px;line-height:5.04px;color:#fff;font-weight:700;left:18.4px;transform:translateX(-50%);">3</span>
<span class="t" style="top:447px;font-size:5px;line-height:7.0px;color:#333;left:24.2px;">31°C</span>
<span class="t" style="top:454px;font-size:4.9px;line-height:6.86px;color:#444;left:24.2px;">多云</span>
<svg style="left:121.8px;top:448.4px;" width="10.2" height="10.4" viewBox="0 0 10.2 10.4"><rect x="0" y="0" width="4.9" height="4.9" fill="#1a8fe8"/><rect x="5.5" y="0" width="4.9" height="4.9" fill="#1a8fe8"/><rect x="0" y="5.5" width="4.9" height="4.9" fill="#1a8fe8"/><rect x="5.5" y="5.5" width="4.9" height="4.9" fill="#1a8fe8"/></svg>
<div style="left:137px;top:445.6px;width:93.4px;height:14.2px;background:#f3f7fa;border-radius:7.1px;"></div>
<svg style="left:142.6px;top:449.6px;" width="6.6" height="6.6" viewBox="0 0 6.6 6.6"><circle cx="2.7" cy="2.7" r="2" fill="none" stroke="#333" stroke-width=".8"/><path d="M4.2 4.2 L6 6" stroke="#333" stroke-width=".9"/></svg>
<span class="t" style="top:450px;font-size:5.2px;line-height:7.28px;color:#666;left:153.2px;">搜索</span>
<svg style="left:207.6px;top:446.6px;" width="19" height="12" viewBox="0 0 19 12"><path d="M3 11 Q3 4.4 9.5 4.4 Q16 4.4 16 11Z" fill="#3d9a4a"/><circle cx="5" cy="4" r="1.6" fill="#e8573a"/><circle cx="9.6" cy="2.2" r="1.5" fill="#f3b430"/><circle cx="14" cy="4" r="1.6" fill="#4a7fe8"/><circle cx="2" cy="8" r="1.3" fill="#9a55d8"/><circle cx="17" cy="8" r="1.3" fill="#e85aa0"/><circle cx="9.5" cy="8" r="1.8" fill="#f6d65a"/></svg>
<svg style="left:235.8px;top:448.0px;" width="10" height="10" viewBox="0 0 10 10"><rect x="1" y="2" width="5" height="6.4" fill="#2b2b2b"/><rect x="3.6" y="3.4" width="5.6" height="5" fill="#f4f4f4" stroke="#555" stroke-width=".4"/></svg>
<svg style="left:254.60000000000002px;top:448.0px;" width="10" height="10" viewBox="0 0 10 10"><circle cx="5" cy="5" r="4.4" fill="#1b7fd0"/><path d="M1 6 Q1.4 2 5.4 1.4 Q8.8 1.4 9.3 4.6 Q7.6 3 5.6 3.6 Q3.8 4.4 4.4 6.6 Q5.4 8.6 8 7.6 Q6 9.8 3.4 8.8 Q1.4 8 1 6Z" fill="#39c5b0"/></svg>
<svg style="left:272.8px;top:448.0px;" width="10" height="10" viewBox="0 0 10 10"><rect x="1" y="2.2" width="8" height="7" rx="1" fill="#1f5fb8"/><path d="M3.2 2.2 V1.4 Q3.2 .8 3.8 .8 H6.2 Q6.8 .8 6.8 1.4 V2.2" stroke="#1f5fb8" stroke-width=".7" fill="none"/><rect x="3" y="3.8" width="1.8" height="1.8" fill="#f25022"/><rect x="5.2" y="3.8" width="1.8" height="1.8" fill="#7fba00"/><rect x="3" y="6" width="1.8" height="1.8" fill="#00a4ef"/><rect x="5.2" y="6" width="1.8" height="1.8" fill="#ffb900"/></svg>
<svg style="left:292.0px;top:448.0px;" width="10" height="10" viewBox="0 0 10 10"><circle cx="5" cy="5" r="4.3" fill="#dbe4ff"/><circle cx="5" cy="5" r="3" fill="#c3b6f2"/><circle cx="3.8" cy="4.8" r=".6" fill="#fff"/><circle cx="6.2" cy="4.8" r=".6" fill="#fff"/></svg>
<svg style="left:311.0px;top:448.0px;" width="10" height="10" viewBox="0 0 10 10"><rect x=".6" y=".6" width="8.8" height="8.8" rx="2" fill="#fdfefe"/><path d="M2 3 Q3.6 3.4 5 5.6 Q6.4 3.4 8 3 Q7.6 6 5.6 6.6 L5 7.6 L4.4 6.6 Q2.4 6 2 3Z" fill="#1677e5"/></svg>
<svg style="left:329.4px;top:448.0px;" width="10" height="10" viewBox="0 0 10 10"><path d="M.6 2 H4 L5 3 H9.4 V8.6 H.6Z" fill="#f3b62a"/><rect x=".6" y="4" width="8.8" height="4.6" fill="#fbd35a"/></svg>
<div style="left:332.6px;top:459.6px;width:3.6px;height:0.9px;background:#7a868e;border-radius:.5px;"></div>
<svg style="left:348.0px;top:448.0px;" width="10" height="10" viewBox="0 0 10 10"><rect x=".8" y="1.2" width="8.4" height="7.6" rx="1.4" fill="#2f9df0"/><path d="M1.4 2.4 L5 5.4 L8.6 2.4" stroke="#d9efff" stroke-width=".8" fill="none"/></svg>
<svg style="left:366.4px;top:448.0px;" width="10" height="10" viewBox="0 0 10 10"><rect x="3.4" y="1.2" width="6" height="7.4" rx=".8" fill="#2a8de0"/><rect x=".6" y="2.6" width="5.6" height="5.6" rx=".8" fill="#0f5fb0"/><circle cx="3.4" cy="5.4" r="1.6" fill="none" stroke="#fff" stroke-width=".7"/><path d="M6.4 5 L9.4 3 V8 L6.4 7Z" fill="#7cc4f5"/></svg>
<div style="left:383.2px;top:443.6px;width:14px;height:19px;background:rgba(255,255,255,.55);border-radius:1.6px;"></div>
<svg style="left:385.2px;top:448.0px;" width="10" height="10" viewBox="0 0 10 10"><path d="M.6 1.4 H9.4 L8 7.8 L6 4.8 L5 7.8 L3.2 7.8 Z" fill="#e33a26"/><path d="M2.6 2.8 L3.6 6 L5 3.4 L6.4 6 L7.4 2.8" stroke="#fff" stroke-width=".8" fill="none"/></svg>
<div style="left:387.4px;top:459.6px;width:5.6px;height:1px;background:#2a8a9a;border-radius:.5px;"></div>
<svg style="left:403.4px;top:448.0px;" width="10" height="10" viewBox="0 0 10 10"><rect x=".6" y="1.4" width="8.8" height="7.2" rx="1.2" fill="#3a8fe8"/><rect x="2" y="3" width="6" height="4" fill="#d9ecff"/><path d="M3 4 H7 M3 5.6 H6" stroke="#3a8fe8" stroke-width=".5"/></svg>
<svg style="left:422.2px;top:448.0px;" width="10" height="10" viewBox="0 0 10 10"><circle cx="5" cy="5" r="4.5" fill="#fdfefe"/><path d="M2 6.4 Q2 3 5 3 Q8 3 8 6.4" stroke="#2b6fe8" stroke-width="1" fill="none"/><circle cx="5" cy="3" r="1.2" fill="#e8453a"/><circle cx="2.6" cy="6.8" r="1.1" fill="#2b6fe8"/><circle cx="7.4" cy="6.8" r="1.1" fill="#f2a030"/></svg>
<div style="left:439.6px;top:444.6px;width:13px;height:16.6px;background:#f1bfc0;border-radius:1.6px;border:.5px solid #e59a9c;"></div>
<svg style="left:441.2px;top:448.0px;" width="10" height="10" viewBox="0 0 10 10"><ellipse cx="5" cy="6" rx="3.2" ry="3.6" fill="#111"/><circle cx="5" cy="3" r="2.3" fill="#111"/><ellipse cx="5" cy="6.8" rx="1.9" ry="2.3" fill="#fff"/><path d="M2.2 4.6 Q5 6 7.8 4.6 L7.8 5.8 Q5 7 2.2 5.8Z" fill="#e02020"/><ellipse cx="5" cy="3.8" rx="1.2" ry=".5" fill="#f6a800"/></svg>
<div style="left:442.6px;top:459.8px;width:7.2px;height:1px;background:#d9363a;border-radius:.5px;"></div>
<svg style="left:485.2px;top:451.4px;" width="4.6" height="3" viewBox="0 0 4.6 3"><path d="M.4 2.6 L2.3 .6 L4.2 2.6" stroke="#333" stroke-width=".7" fill="none"/></svg>
<svg style="left:496.6px;top:449.0px;" width="8" height="8" viewBox="0 0 10 10"><rect x="1.4" y="2.4" width="5.6" height="4.4" fill="#e8d9f0"/><rect x="3" y="4" width="5.6" height="4" fill="#b8d2f5"/></svg>
<svg style="left:509.6px;top:449.0px;" width="8" height="8" viewBox="0 0 10 10"><rect x="1.4" y="2" width="7" height="3" rx=".8" fill="#222"/><rect x="1.4" y="5.6" width="7" height="3" rx=".8" fill="#222"/><circle cx="7" cy="3.5" r=".6" fill="#fff"/></svg>
<svg style="left:522.4px;top:449.0px;" width="8" height="8" viewBox="0 0 10 10"><rect x="1" y="1.4" width="8" height="7.2" rx="1.6" fill="#fdfefe"/><path d="M2.6 3.4 Q3.8 3.8 5 5.6 Q6.2 3.8 7.4 3.4 Q7.2 6 5.6 6.4 L5 7.2 L4.4 6.4 Q2.8 6 2.6 3.4Z" fill="#1677e5"/></svg>
<svg style="left:536.2px;top:449.0px;" width="8" height="8" viewBox="0 0 10 10"><rect x="1" y="2" width="8" height="6.2" rx="1" fill="#3a8fe8"/><rect x="2.2" y="3.2" width="5.6" height="3.4" fill="#d9ecff"/></svg>
<svg style="left:552.6px;top:448.6px;" width="5" height="8.4" viewBox="0 0 5 8.4"><rect x="1.5" y=".5" width="2" height="4.4" rx="1" fill="none" stroke="#333" stroke-width=".6"/><path d="M.5 3.6 Q.5 6 2.5 6 Q4.5 6 4.5 3.6 M2.5 6 V7.8" stroke="#333" stroke-width=".6" fill="none"/></svg>
<span class="t" style="top:450px;font-size:5.2px;line-height:7.28px;color:#222;left:569.4px;transform:translateX(-50%);">中</span>
<svg style="left:577.4px;top:449.4px;" width="8" height="6.4" viewBox="0 0 8 6.4"><path d="M.5 2.4 Q4 -1 7.5 2.4 M1.8 3.8 Q4 1.8 6.2 3.8" stroke="#222" stroke-width=".8" fill="none"/><circle cx="4" cy="5.2" r=".8" fill="#222"/></svg>
<svg style="left:587.8px;top:449.6px;" width="7.6" height="6.6" viewBox="0 0 7.6 6.6"><path d="M.4 2.2 H1.8 L3.6 .6 V6 L1.8 4.4 H.4Z" fill="#222"/><path d="M4.6 2 Q5.4 3.3 4.6 4.6 M5.8 1 Q7.2 3.3 5.8 5.6" stroke="#222" stroke-width=".6" fill="none"/></svg>
<svg style="left:598.2px;top:450px;" width="8.4" height="6" viewBox="0 0 8.4 6"><rect x=".4" y="1" width="6.4" height="3.8" rx=".9" fill="none" stroke="#222" stroke-width=".7"/><rect x="1.2" y="1.8" width="3.6" height="2.2" fill="#222"/><rect x="7.2" y="2.2" width=".8" height="1.5" fill="#222"/></svg>
<span class="t" style="top:448px;font-size:4.8px;line-height:6.72px;color:#222;left:636.6px;transform:translateX(-100%);">20:27</span>
<span class="t" style="top:454px;font-size:5px;line-height:7.0px;color:#222;left:636.6px;transform:translateX(-100%);">2025/7/30</span>
<svg style="left:641.2px;top:449px;" width="6" height="7.6" viewBox="0 0 6 7.6"><path d="M.6 5.6 Q1.4 4.8 1.4 3 Q1.4 .8 3 .8 Q4.6 .8 4.6 3 Q4.6 4.8 5.4 5.6Z" fill="#222"/><path d="M2.2 6.4 Q3 7.4 3.8 6.4Z" fill="#222"/></svg>
<div style="left:310.8px;top:65px;width:36px;height:17.2px;background:#252525;border-radius:3px;box-shadow:0 0 1px rgba(0,0,0,.4);"></div>
<svg style="left:315.6px;top:71px;" width="5" height="5.4" viewBox="0 0 5 5.4"><rect x="0" y="3.4" width="1" height="1.9" rx=".3" fill="#1aa85a"/><rect x="1.8" y="1.9" width="1" height="3.4" rx=".3" fill="#1aa85a"/><rect x="3.6" y=".3" width="1" height="5" rx=".3" fill="#1aa85a"/></svg>
<span class="t" style="top:71px;font-size:6.3px;line-height:8.82px;color:#f4f4f4;left:324.2px;">共享中</span>
<div style="left:1.9px;top:55.2px;width:20.8px;height:3.1px;background:#0d96f7;"></div>
<div style="left:1.9px;top:55.2px;width:3.8px;height:20.6px;background:#0d96f7;"></div>
<div style="left:634.8px;top:55.2px;width:20.8px;height:3.7px;background:#0d96f7;"></div>
<div style="left:651.8px;top:55.2px;width:3.8px;height:19.8px;background:#0d96f7;"></div>
<div style="left:1.9px;top:459.8px;width:20.8px;height:4px;background:#0d96f7;"></div>
<div style="left:1.9px;top:443.4px;width:4.1px;height:20.4px;background:#0d96f7;"></div>
<div style="left:634.8px;top:460px;width:20.8px;height:3.8px;background:#0d96f7;"></div>
<div style="left:651.8px;top:443.4px;width:3.8px;height:20.4px;background:#0d96f7;"></div>
<div style="left:660.2px;top:20.9px;width:137.8px;height:78.6px;background:#2a2a2a;border-radius:3.5px;"></div>
<svg style="left:712.4px;top:42.7px;" width="34.8" height="34.8" viewBox="0 0 34.8 34.8"><defs><clipPath id="av0"><circle cx="17.4" cy="17.4" r="17.4"/></clipPath></defs><g clip-path="url(#av0)"><rect width="35" height="35" fill="#fffafa"/><path d="M0 6 Q5 4 9 9 Q6 16 9 24 Q12 31 17 35 L0 35Z" fill="#f59cb6"/><path d="M5 9 Q9 3 16 5 Q11 6 9 11Z" fill="#f9c3d1"/><path d="M10 5 Q16 0 24 3 Q28 6 26 9 Q20 4 10 5Z" fill="#f8bccb"/><path d="M17 6 Q20 3 22 7 Q20 8 17 6Z" fill="#f7a8bd"/><circle cx="5.6" cy="14.4" r="1.1" fill="#b7a040"/><path d="M10.5 24 h6 M27 27 h4" stroke="#d8b8a0" stroke-width=".8"/><path d="M12 25.4 h3.4 M20 28 v4 M22.6 28 v4" stroke="#f2c6cf" stroke-width=".7"/></g></svg>
<svg style="left:666.7px;top:82.39999999999999px;" width="9.8" height="11.6" viewBox="0 0 11 13"><defs><linearGradient id="mg" x1="0" y1="0" x2="0" y2="1"><stop offset="0" stop-color="#3b7bff"/><stop offset="1" stop-color="#2fe0a0"/></linearGradient></defs><rect x="3.4" y="0.8" width="4.2" height="7.4" rx="2.1" fill="url(#mg)" stroke="#dfe8ff" stroke-width=".5"/><path d="M1.6 5.6 V6.2 A3.9 3.9 0 0 0 9.4 6.2 V5.6 M5.5 10.2 V12 M3.6 12.1 H7.4" fill="none" stroke="#e8e8e8" stroke-width=".9" stroke-linecap="round"/></svg>
<span class="t" style="top:83px;font-size:9px;line-height:12.6px;color:#f2f2f2;font-weight:500;left:680.4px;">马院+刘露</span>
<div style="left:660.2px;top:102.6px;width:137.8px;height:78.6px;background:#2a2a2a;border-radius:3.5px;"></div>
<svg style="left:712.4px;top:124.4px;" width="34.8" height="34.8" viewBox="0 0 34.8 34.8"><defs><clipPath id="av1"><circle cx="17.4" cy="17.4" r="17.4"/></clipPath></defs><g clip-path="url(#av1)"><rect width="35" height="35" fill="#ffffff"/><g transform="translate(17.5 17.2) scale(1.3) translate(-17.5 -18.4)"><path d="M9.4 21 Q7.6 25 9 27.4 Q10.6 25.6 11.4 23Z M25.6 21 Q27.4 25 26 27.4 Q24.4 25.6 23.6 23Z" fill="#111"/><ellipse cx="17.5" cy="22.4" rx="7.6" ry="8" fill="#111"/><ellipse cx="17.5" cy="13" rx="6.3" ry="5.8" fill="#111"/><ellipse cx="17.5" cy="24" rx="5.4" ry="5.6" fill="#fff"/><ellipse cx="15.4" cy="11.8" rx="1.3" ry="1.8" fill="#fff"/><ellipse cx="19.6" cy="11.8" rx="1.3" ry="1.8" fill="#fff"/><circle cx="15.7" cy="12" r=".5" fill="#111"/><circle cx="19.3" cy="12" r=".5" fill="#111"/><ellipse cx="17.5" cy="15.2" rx="3.3" ry="1.15" fill="#f6a800"/><path d="M10.6 16.6 Q17.5 19.8 24.4 16.6 L25 19.2 Q17.5 22.6 10 19.2 Z" fill="#e81c1c"/><path d="M12.4 19.8 L12 24.2 L15 24 L15 20.8 Z" fill="#e81c1c"/><ellipse cx="13.6" cy="30.2" rx="3.2" ry="1" fill="#f6a800"/><ellipse cx="21.4" cy="30.2" rx="3.2" ry="1" fill="#f6a800"/></g></g></svg>
<svg style="left:666.7px;top:164.09999999999997px;" width="9.8" height="11.6" viewBox="0 0 11 13"><rect x="3.5" y="0.9" width="4" height="7" rx="2" fill="none" stroke="#e8e8e8" stroke-width=".9"/><path d="M1.6 5.6 V6.2 A3.9 3.9 0 0 0 9.4 6.2 V5.6 M5.5 10.2 V12 M3.6 12.1 H7.4" fill="none" stroke="#e8e8e8" stroke-width=".9" stroke-linecap="round"/></svg>
<span class="t" style="top:165px;font-size:9px;line-height:12.6px;color:#f2f2f2;font-weight:500;left:680.4px;">马院+庄建花</span>
<div style="left:660.2px;top:184.3px;width:137.8px;height:78.6px;background:#2a2a2a;border-radius:3.5px;"></div>
<svg style="left:712.4px;top:206.1px;" width="34.8" height="34.8" viewBox="0 0 34.8 34.8"><defs><clipPath id="av2"><circle cx="17.4" cy="17.4" r="17.4"/></clipPath></defs><g clip-path="url(#av2)"><rect width="35" height="35" fill="#9fd4f5"/><path d="M8 9 Q9 1 12 2 Q13 5 12.4 9Z M13 8 Q15 0 17.6 2 Q17 6 15.6 9Z" fill="#fdeef0" stroke="#f3b8c6" stroke-width=".4"/><path d="M17 8 Q21 1 28 4 Q31 7 29 11 Q24 7 17 8Z" fill="#f6dc8a"/><path d="M20 5 Q24 3 28 6 L27 8 Q24 5.6 20.6 6.6Z" fill="#f3a64a"/><path d="M24 3.4 L26.4 2 L27.4 4.4Z" fill="#7cc6e8"/><ellipse cx="17.5" cy="18.6" rx="14.6" ry="11.6" fill="#fce8e8"/><circle cx="8.4" cy="18.6" r="4.3" fill="#4a2320"/><circle cx="23.4" cy="17.6" r="4.3" fill="#4a2320"/><circle cx="7" cy="17.4" r="1.5" fill="#fff"/><circle cx="22" cy="16.2" r="1.5" fill="#fff"/><circle cx="9.6" cy="20.4" r=".7" fill="#a77"/><circle cx="24.6" cy="19.4" r=".7" fill="#a77"/><ellipse cx="4.4" cy="24" rx="2.2" ry="1.3" fill="#f9b8c4"/><ellipse cx="28.6" cy="23" rx="2.2" ry="1.3" fill="#f9b8c4"/><path d="M4 31 Q10 27 17.5 28 Q25 27 31 31 L30 35 H5Z" fill="#7ec46a"/><path d="M12 27.4 L16.4 29.2 L12.6 32Z M23 27.4 L18.6 29.2 L22.4 32Z" fill="#e0392e"/><circle cx="17.5" cy="29.6" r="1.7" fill="#f4d24c"/></g></svg>
<svg style="left:666.7px;top:245.8px;" width="9.8" height="11.6" viewBox="0 0 11 13"><rect x="3.5" y="0.9" width="4" height="7" rx="2" fill="none" stroke="#e8e8e8" stroke-width=".9"/><path d="M1.6 5.6 V6.2 A3.9 3.9 0 0 0 9.4 6.2 V5.6 M5.5 10.2 V12 M3.6 12.1 H7.4" fill="none" stroke="#e8e8e8" stroke-width=".9" stroke-linecap="round"/></svg>
<span class="t" style="top:247px;font-size:9px;line-height:12.6px;color:#f2f2f2;font-weight:500;left:680.4px;">汽车学院 朱慧君</span>
<div style="left:660.2px;top:266.0px;width:137.8px;height:78.6px;background:#2a2a2a;border-radius:3.5px;"></div>
<svg style="left:712.4px;top:287.8px;" width="34.8" height="34.8" viewBox="0 0 34.8 34.8"><defs><clipPath id="av3"><circle cx="17.4" cy="17.4" r="17.4"/></clipPath></defs><g clip-path="url(#av3)"><rect width="35" height="35" fill="#ffffff"/><ellipse cx="17" cy="13.4" rx="7.3" ry="9.8" fill="#fff" stroke="#777" stroke-width=".55"/><path d="M12.6 9.6 h2.4 M18.6 9.6 h2.4 M13.6 10.8 h.8 M19.4 10.8 h.8 M16.4 11.4 v3.6 M15.6 17.4 h1.8" stroke="#777" stroke-width=".5" fill="none"/><path d="M14.4 22.8 V25 Q17 26.6 19.8 25 V22.8" fill="none" stroke="#777" stroke-width=".5"/><path d="M9.6 35 Q9.4 26.6 14.4 25 M19.8 25 Q25.4 26.6 25.2 35" fill="none" stroke="#777" stroke-width=".55"/></g></svg>
<svg style="left:666.7px;top:327.5px;" width="9.8" height="11.6" viewBox="0 0 11 13"><rect x="3.5" y="0.9" width="4" height="7" rx="2" fill="none" stroke="#e8e8e8" stroke-width=".9"/><path d="M1.6 5.6 V6.2 A3.9 3.9 0 0 0 9.4 6.2 V5.6 M5.5 10.2 V12 M3.6 12.1 H7.4" fill="none" stroke="#e8e8e8" stroke-width=".9" stroke-linecap="round"/><path d="M1.2 1 L10 11.6" stroke="#2b2b2b" stroke-width="2.2"/><path d="M1.6 0.8 L9.8 11.2" stroke="#e8e8e8" stroke-width=".9" stroke-linecap="round"/></svg>
<span class="t" style="top:328px;font-size:9px;line-height:12.6px;color:#f2f2f2;font-weight:500;left:680.4px;">信息-王启超</span>
<div style="left:660.2px;top:347.7px;width:137.8px;height:78.6px;background:#2a2a2a;border-radius:3.5px;"></div>
<svg style="left:712.4px;top:369.5px;" width="34.8" height="34.8" viewBox="0 0 34.8 34.8"><defs><clipPath id="av4"><circle cx="17.4" cy="17.4" r="17.4"/></clipPath><linearGradient id="a5f" x1="0" y1="0" x2="0" y2="1"><stop offset="0" stop-color="#5f6a68"/><stop offset="1" stop-color="#aab6b4"/></linearGradient><radialGradient id="a5g" cx=".55" cy=".62" r=".35"><stop offset="0" stop-color="#fff"/><stop offset="1" stop-color="#fff" stop-opacity="0"/></radialGradient></defs><g clip-path="url(#av4)"><rect width="35" height="35" fill="#171111"/><rect x="0" y="14" width="35" height="14" fill="#2c1916"/><rect x="1" y="15" width="5" height="13" fill="#1d1211"/><rect x="29" y="15" width="5" height="13" fill="#1d1211"/><rect x="6.6" y="16.6" width="3" height="11.4" fill="#4a241d"/><rect x="25.4" y="16.6" width="3" height="11.4" fill="#4a241d"/><rect x="10.4" y="17.4" width="14.2" height="10.6" fill="#8f9794"/><rect x="12.6" y="18.6" width="9.8" height="8.4" fill="#e9eceb"/><rect x="13.4" y="19.4" width="1.3" height="5.4" fill="#a8483e"/><rect x="20.4" y="19.4" width="1.3" height="5.4" fill="#a8483e"/><rect x="16.2" y="19.6" width="2.6" height="5" fill="#c9cfd0"/><path d="M2 13 L16.4 5.4 M18.8 5.4 L33 13" stroke="#261a18" stroke-width="3"/><path d="M5.4 10.4 L8 9 M10.4 7.8 L13.6 6.2 M21.6 6.2 L24.6 7.8 M27 9 L30 10.6" stroke="#d9d9d9" stroke-width=".8"/><rect x="0" y="27.4" width="35" height="8" fill="url(#a5f)"/><rect width="35" height="35" fill="url(#a5g)" opacity=".35"/></g></svg>
<svg style="left:666.7px;top:409.2px;" width="9.8" height="11.6" viewBox="0 0 11 13"><rect x="3.5" y="0.9" width="4" height="7" rx="2" fill="none" stroke="#e8e8e8" stroke-width=".9"/><path d="M1.6 5.6 V6.2 A3.9 3.9 0 0 0 9.4 6.2 V5.6 M5.5 10.2 V12 M3.6 12.1 H7.4" fill="none" stroke="#e8e8e8" stroke-width=".9" stroke-linecap="round"/><path d="M1.2 1 L10 11.6" stroke="#2b2b2b" stroke-width="2.2"/><path d="M1.6 0.8 L9.8 11.2" stroke="#e8e8e8" stroke-width=".9" stroke-linecap="round"/></svg>
<span class="t" style="top:410px;font-size:9px;line-height:12.6px;color:#f2f2f2;font-weight:500;left:680.4px;">土木-黄净</span>
<div style="left:660.2px;top:429.4px;width:137.8px;height:78.6px;background:#2a2a2a;border-radius:3.5px;"></div>
<svg style="left:712.4px;top:451.2px;" width="34.8" height="34.8" viewBox="0 0 34.8 34.8"><defs><clipPath id="av5"><circle cx="17.4" cy="17.4" r="17.4"/></clipPath><radialGradient id="a6g" cx=".5" cy=".4" r=".65"><stop offset="0" stop-color="#ffffff"/><stop offset=".6" stop-color="#f1f3f0"/><stop offset="1" stop-color="#cfd5cf"/></radialGradient></defs><g clip-path="url(#av5)"><rect width="35" height="35" fill="url(#a6g)"/><g fill="none" stroke-linecap="round"><path d="M13.6 34 Q15 24 22 15 Q27 9.4 34 7" stroke="#2f7d2c" stroke-width="1.1"/><path d="M14.4 34 Q18 25 26 19 Q30 16 35 15.4" stroke="#3c8f36" stroke-width="1.2"/><path d="M15 34 Q20 28 28 25.6 Q32 24.6 35 25" stroke="#2b6f2a" stroke-width="1"/><path d="M12.6 34 Q11.6 26 8 20 Q6.4 17.4 4.4 16" stroke="#3a8a34" stroke-width="1"/><path d="M13 34 Q12.6 24 10.4 17 Q9.6 14 8.6 12.6" stroke="#4c9a40" stroke-width=".9"/><path d="M13.4 34 Q14.4 24 12.8 15 Q12 11 10.6 8.4" stroke="#6aa858" stroke-width=".7"/><path d="M14 33 Q16 22 19.4 15 Q21 12 23.4 10" stroke="#7ab868" stroke-width=".7"/><path d="M16 34 Q22 31 30 31.6" stroke="#3a7a34" stroke-width=".9"/></g><g fill="#d9e6a8"><ellipse cx="10" cy="7.6" rx="1.6" ry=".8" transform="rotate(-30 10 7.6)"/><ellipse cx="7.4" cy="11.4" rx="1.8" ry=".8" transform="rotate(20 7.4 11.4)"/><ellipse cx="10.4" cy="16" rx="1.6" ry=".8" transform="rotate(-20 10.4 16)"/><ellipse cx="22.6" cy="9.6" rx="1.7" ry=".8" transform="rotate(-35 22.6 9.6)"/><ellipse cx="19.4" cy="13.4" rx="1.6" ry=".8" transform="rotate(15 19.4 13.4)"/><ellipse cx="16.6" cy="17.4" rx="1.5" ry=".8"/></g><g fill="#d9a070"><circle cx="8" cy="11" r=".5"/><circle cx="10.8" cy="16.6" r=".5"/><circle cx="19" cy="13.8" r=".5"/></g></g></svg>
<svg style="left:666.7px;top:490.9px;" width="9.8" height="11.6" viewBox="0 0 11 13"><rect x="3.5" y="0.9" width="4" height="7" rx="2" fill="none" stroke="#e8e8e8" stroke-width=".9"/><path d="M1.6 5.6 V6.2 A3.9 3.9 0 0 0 9.4 6.2 V5.6 M5.5 10.2 V12 M3.6 12.1 H7.4" fill="none" stroke="#e8e8e8" stroke-width=".9" stroke-linecap="round"/><path d="M1.2 1 L10 11.6" stroke="#2b2b2b" stroke-width="2.2"/><path d="M1.6 0.8 L9.8 11.2" stroke="#e8e8e8" stroke-width=".9" stroke-linecap="round"/></svg>
<span class="t" style="top:492px;font-size:9px;line-height:12.6px;color:#f2f2f2;font-weight:500;left:680.4px;">唐兰兰</span>
<svg style="left:782.4px;top:83.6px;" width="11" height="10" viewBox="0 0 11 10"><rect x=".6" y=".6" width="9.8" height="6.6" rx=".8" fill="none" stroke="#e8e8e8" stroke-width=".9"/><path d="M3.4 9.2 H7.6 M5.5 7.4 V9" stroke="#e8e8e8" stroke-width=".9"/><path d="M3.6 5.4 Q4 3.6 6 3.6 V2.5 L7.9 4 L6 5.5 V4.5 Q4.6 4.4 3.6 5.4Z" fill="#e8e8e8"/></svg>
<div style="left:657.5px;top:498.8px;width:142px;height:31px;background:#1a1a1a;"></div>
<div style="left:304.5px;top:513.3px;width:29.5px;height:24px;background:#ffffff;border-radius:6px;"></div>
<div style="left:315.6px;top:521.4px;width:6.8px;height:12px;border:1.6px solid #2a2a2a;border-radius:3.4px;"></div>
<div style="left:389px;top:513.3px;width:29.5px;height:24px;background:#444444;border-radius:6px;"></div>
<svg style="left:396px;top:522px;" width="16" height="8" viewBox="0 0 16 8"><path d="M0.8 7.5 V1.8 H9 M11.2 7.5 V3.4 L14.6 1.4 V7.5 M2 1.2 L9.5 7.5" stroke="#e6e6e6" stroke-width="1.2" fill="none"/></svg>
<div style="left:469px;top:513.3px;width:29.5px;height:24px;background:#f5365c;border-radius:6px;"></div>
<svg style="left:476.5px;top:525.4px;" width="14" height="5" viewBox="0 0 14 5"><path d="M1 4.6 Q1 1 7 1 Q13 1 13 4.6" stroke="#fff" stroke-width="1.8" fill="none"/></svg>
</div></body></html>
